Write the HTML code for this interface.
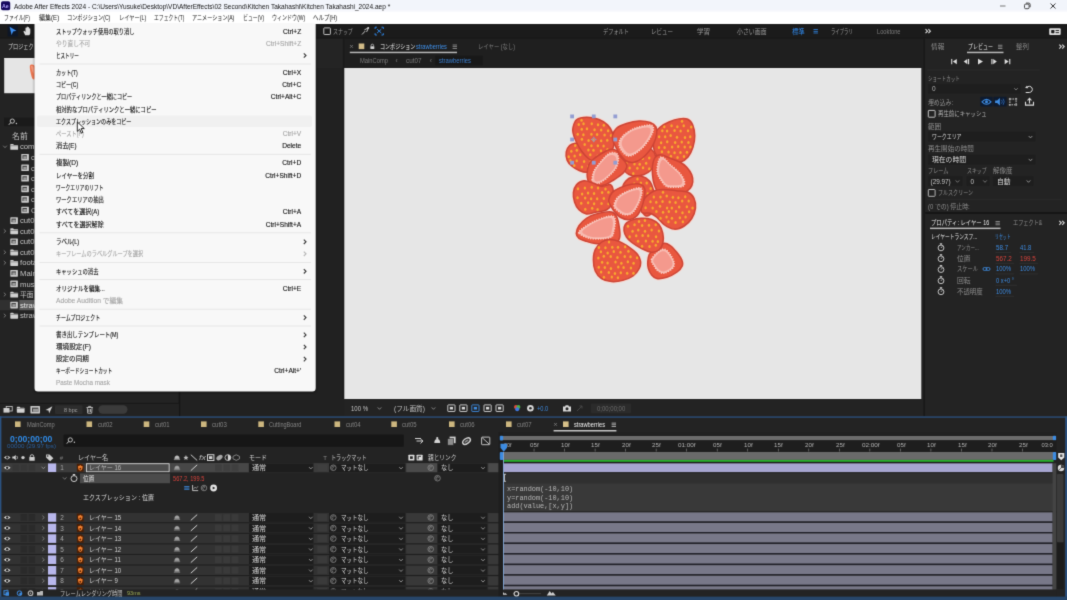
<!DOCTYPE html>
<html lang="ja">
<head>
<meta charset="utf-8">
<title>Adobe After Effects 2024</title>
<style>
html,body{margin:0;padding:0;}
body{width:1067px;height:600px;overflow:hidden;background:#232323;position:relative;
font-family:"Liberation Sans","Noto Sans CJK JP",sans-serif;}
#app{position:absolute;left:0;top:0;width:1067px;height:600px;overflow:hidden;background:#232323;filter:url(#soft);}
#app svg.g{position:absolute;left:0;top:0;}
.t{position:absolute;white-space:nowrap;display:block;}
.b{font-weight:bold;}
.k{-webkit-text-stroke:0.12px currentColor;}
.m{font-family:"Liberation Mono","DejaVu Sans Mono",monospace;}
</style>
</head>
<body>
<svg width="0" height="0" style="position:absolute" aria-hidden="true"><defs><filter id="soft" x="0" y="0" width="100%" height="100%" color-interpolation-filters="sRGB"><feConvolveMatrix order="3" kernelMatrix="1 6 1 6 36 6 1 6 1" edgeMode="duplicate" preserveAlpha="true"/></filter><filter id="sh" x="-5%" y="-5%" width="110%" height="110%"><feGaussianBlur stdDeviation="1.2"/></filter></defs></svg>
<div id="app">
<svg class="g" width="1067" height="600" viewBox="0 0 1067 600"><rect x="-4" y="38.4" width="183" height="378.1" fill="#232323"/><rect x="178.6" y="38.4" width="1.8" height="378.1" fill="#151515"/><rect x="180.4" y="38.4" width="163.9" height="378.1" fill="#212121"/></svg>
<span id="t1" class="t " style="left:8px;top:42px;font-size:6.4px;line-height:10px;color:#d4d4d4;transform-origin:0 50%;transform:scaleX(0.8);">プロジェクト</span>
<svg class="g" width="1067" height="600" viewBox="0 0 1067 600"><rect x="4.2" y="58.2" width="55.8" height="35" fill="#e5e5e5"/><rect x="4.2" y="58.2" width="55.8" height="0.8" fill="#f3f3f3"/><g transform="translate(27.5 63.5)"><path d="M3.200 1.200C5.500 0.600 7.600 1.600 7.800 4C8.100 8.500 7.800 12.500 7.200 15.800C5.900 16.600 4.800 15.800 4.200 13.600C3.200 10 2.400 6.500 2.300 3.600C2.300 2.300 2.600 1.500 3.200 1.200Z" fill="#ec7650"/><path d="M3.400 2.600C4.800 2.200 6 2.800 6.200 4.400C6.400 6.500 6.300 8.500 6.100 10.200C5.100 9 4 6 3.400 2.600Z" fill="#f29a7e"/></g><rect x="4" y="117.6" width="175" height="8.6" fill="#1a1a1a"/><g transform="translate(8 118.2)"><circle cx="4.300" cy="2.900" r="2.100" stroke="#d0d0d0" stroke-width="0.900" fill="none"/><path d="M2.800 4.400L0.800 6.600" stroke="#d0d0d0" stroke-width="1"/><circle cx="8.400" cy="5.300" r="0.700" fill="#d0d0d0"/></g></svg>
<span id="t2" class="t " style="left:12.2px;top:132px;font-size:7.6px;line-height:10px;color:#c4c4c4;transform-origin:0 50%;transform:scaleX(1.04);">名前</span>
<svg class="g" width="1067" height="600" viewBox="0 0 1067 600"><g transform="translate(10 143.5)"><path d="M0.3 1.0q0-.6.6-.6h2.2l.9 1h3.500q.6 0 .6.600v3.700q0 .6-.6.600H.9q-.6 0-.6-.6z" fill="#cfcfcf"/><rect x="0.3" y="2.100" width="7.800" height="0.500" fill="#555"/></g><g transform="translate(2.6 144.9)"><path d="M0.600 0.800L2.400 2.800L4.200 0.800" stroke="#8a8a8a" stroke-width="0.800" fill="none"/></g></svg>
<span id="t3" class="t " style="left:20.2px;top:142px;font-size:7.4px;line-height:10px;color:#c4c4c4;transform-origin:0 50%;transform:scaleX(1.04);">comp</span>
<svg class="g" width="1067" height="600" viewBox="0 0 1067 600"><g transform="translate(21 153.6)"><rect x="0.300" y="0.300" width="7.600" height="6.600" rx="0.600" fill="#c9c9c9"/><rect x="1.500" y="1.600" width="4.400" height="3.600" fill="#3a3a3a"/><rect x="2.300" y="2.600" width="3.400" height="2.600" fill="#9c9c9c"/></g></svg>
<span id="t4" class="t " style="left:31.2px;top:153px;font-size:7.4px;line-height:10px;color:#c4c4c4;transform-origin:0 50%;transform:scaleX(1.04);">cut01</span>
<svg class="g" width="1067" height="600" viewBox="0 0 1067 600"><g transform="translate(21 164.2)"><rect x="0.300" y="0.300" width="7.600" height="6.600" rx="0.600" fill="#c9c9c9"/><rect x="1.500" y="1.600" width="4.400" height="3.600" fill="#3a3a3a"/><rect x="2.300" y="2.600" width="3.400" height="2.600" fill="#9c9c9c"/></g></svg>
<span id="t5" class="t " style="left:31.2px;top:164px;font-size:7.4px;line-height:10px;color:#c4c4c4;transform-origin:0 50%;transform:scaleX(1.04);">cut02</span>
<svg class="g" width="1067" height="600" viewBox="0 0 1067 600"><g transform="translate(21 174.7)"><rect x="0.300" y="0.300" width="7.600" height="6.600" rx="0.600" fill="#c9c9c9"/><rect x="1.500" y="1.600" width="4.400" height="3.600" fill="#3a3a3a"/><rect x="2.300" y="2.600" width="3.400" height="2.600" fill="#9c9c9c"/></g></svg>
<span id="t6" class="t " style="left:31.2px;top:174px;font-size:7.4px;line-height:10px;color:#c4c4c4;transform-origin:0 50%;transform:scaleX(1.04);">cut03</span>
<svg class="g" width="1067" height="600" viewBox="0 0 1067 600"><g transform="translate(21 185.3)"><rect x="0.300" y="0.300" width="7.600" height="6.600" rx="0.600" fill="#c9c9c9"/><rect x="1.500" y="1.600" width="4.400" height="3.600" fill="#3a3a3a"/><rect x="2.300" y="2.600" width="3.400" height="2.600" fill="#9c9c9c"/></g></svg>
<span id="t7" class="t " style="left:31.2px;top:185px;font-size:7.4px;line-height:10px;color:#c4c4c4;transform-origin:0 50%;transform:scaleX(1.04);">cut04</span>
<svg class="g" width="1067" height="600" viewBox="0 0 1067 600"><g transform="translate(21 195.8)"><rect x="0.300" y="0.300" width="7.600" height="6.600" rx="0.600" fill="#c9c9c9"/><rect x="1.500" y="1.600" width="4.400" height="3.600" fill="#3a3a3a"/><rect x="2.300" y="2.600" width="3.400" height="2.600" fill="#9c9c9c"/></g></svg>
<span id="t8" class="t " style="left:31.2px;top:195px;font-size:7.4px;line-height:10px;color:#c4c4c4;transform-origin:0 50%;transform:scaleX(1.04);">cut05</span>
<svg class="g" width="1067" height="600" viewBox="0 0 1067 600"><g transform="translate(21 206.4)"><rect x="0.300" y="0.300" width="7.600" height="6.600" rx="0.600" fill="#c9c9c9"/><rect x="1.500" y="1.600" width="4.400" height="3.600" fill="#3a3a3a"/><rect x="2.300" y="2.600" width="3.400" height="2.600" fill="#9c9c9c"/></g></svg>
<span id="t9" class="t " style="left:31.2px;top:206px;font-size:7.4px;line-height:10px;color:#c4c4c4;transform-origin:0 50%;transform:scaleX(1.04);">CuttingBoard</span>
<svg class="g" width="1067" height="600" viewBox="0 0 1067 600"><g transform="translate(10 217)"><rect x="0.300" y="0.300" width="7.600" height="6.600" rx="0.600" fill="#c9c9c9"/><rect x="1.500" y="1.600" width="4.400" height="3.600" fill="#3a3a3a"/><rect x="2.300" y="2.600" width="3.400" height="2.600" fill="#9c9c9c"/></g></svg>
<span id="t10" class="t " style="left:20.2px;top:216px;font-size:7.4px;line-height:10px;color:#c4c4c4;transform-origin:0 50%;transform:scaleX(1.04);">cut06</span>
<svg class="g" width="1067" height="600" viewBox="0 0 1067 600"><g transform="translate(10 227.9)"><path d="M0.3 1.0q0-.6.6-.6h2.2l.9 1h3.500q.6 0 .6.600v3.700q0 .6-.6.600H.9q-.6 0-.6-.6z" fill="#cfcfcf"/><rect x="0.3" y="2.100" width="7.800" height="0.500" fill="#555"/></g><g transform="translate(3 228.7)"><path d="M0.800 0.600L2.800 2.400L0.800 4.200" stroke="#8a8a8a" stroke-width="0.800" fill="none"/></g></svg>
<span id="t11" class="t " style="left:20.2px;top:227px;font-size:7.4px;line-height:10px;color:#c4c4c4;transform-origin:0 50%;transform:scaleX(1.04);">cut06 レイヤー</span>
<svg class="g" width="1067" height="600" viewBox="0 0 1067 600"><g transform="translate(10 238.1)"><rect x="0.300" y="0.300" width="7.600" height="6.600" rx="0.600" fill="#c9c9c9"/><rect x="1.500" y="1.600" width="4.400" height="3.600" fill="#3a3a3a"/><rect x="2.300" y="2.600" width="3.400" height="2.600" fill="#9c9c9c"/></g></svg>
<span id="t12" class="t " style="left:20.2px;top:237px;font-size:7.4px;line-height:10px;color:#c4c4c4;transform-origin:0 50%;transform:scaleX(1.04);">cut07</span>
<svg class="g" width="1067" height="600" viewBox="0 0 1067 600"><g transform="translate(10 249.1)"><path d="M0.3 1.0q0-.6.6-.6h2.2l.9 1h3.500q.6 0 .6.600v3.700q0 .6-.6.600H.9q-.6 0-.6-.6z" fill="#cfcfcf"/><rect x="0.3" y="2.100" width="7.800" height="0.500" fill="#555"/></g><g transform="translate(3 249.9)"><path d="M0.800 0.600L2.800 2.400L0.800 4.200" stroke="#8a8a8a" stroke-width="0.800" fill="none"/></g></svg>
<span id="t13" class="t " style="left:20.2px;top:248px;font-size:7.4px;line-height:10px;color:#c4c4c4;transform-origin:0 50%;transform:scaleX(1.04);">cut07 レイヤー</span>
<svg class="g" width="1067" height="600" viewBox="0 0 1067 600"><g transform="translate(10 259.6)"><path d="M0.3 1.0q0-.6.6-.6h2.2l.9 1h3.500q.6 0 .6.600v3.700q0 .6-.6.600H.9q-.6 0-.6-.6z" fill="#cfcfcf"/><rect x="0.3" y="2.100" width="7.800" height="0.500" fill="#555"/></g><g transform="translate(3 260.4)"><path d="M0.800 0.600L2.800 2.400L0.800 4.200" stroke="#8a8a8a" stroke-width="0.800" fill="none"/></g></svg>
<span id="t14" class="t " style="left:20.2px;top:258px;font-size:7.4px;line-height:10px;color:#c4c4c4;transform-origin:0 50%;transform:scaleX(1.04);">footage</span>
<svg class="g" width="1067" height="600" viewBox="0 0 1067 600"><g transform="translate(10 269.8)"><rect x="0.300" y="0.300" width="7.600" height="6.600" rx="0.600" fill="#c9c9c9"/><rect x="1.500" y="1.600" width="4.400" height="3.600" fill="#3a3a3a"/><rect x="2.300" y="2.600" width="3.400" height="2.600" fill="#9c9c9c"/></g></svg>
<span id="t15" class="t " style="left:20.2px;top:269px;font-size:7.4px;line-height:10px;color:#c4c4c4;transform-origin:0 50%;transform:scaleX(1.04);">MainComp</span>
<svg class="g" width="1067" height="600" viewBox="0 0 1067 600"><g transform="translate(10 280.3)"><rect x="0.300" y="0.300" width="7.600" height="6.600" rx="0.600" fill="#c9c9c9"/><rect x="1.500" y="1.600" width="4.400" height="3.600" fill="#3a3a3a"/><rect x="2.300" y="2.600" width="3.400" height="2.600" fill="#9c9c9c"/></g></svg>
<span id="t16" class="t " style="left:20.2px;top:280px;font-size:7.4px;line-height:10px;color:#c4c4c4;transform-origin:0 50%;transform:scaleX(1.04);">mushroom</span>
<svg class="g" width="1067" height="600" viewBox="0 0 1067 600"><g transform="translate(10 291.3)"><path d="M0.3 1.0q0-.6.6-.6h2.2l.9 1h3.500q.6 0 .6.600v3.700q0 .6-.6.600H.9q-.6 0-.6-.6z" fill="#cfcfcf"/><rect x="0.3" y="2.100" width="7.800" height="0.500" fill="#555"/></g><g transform="translate(3 292.1)"><path d="M0.800 0.600L2.800 2.400L0.800 4.200" stroke="#8a8a8a" stroke-width="0.800" fill="none"/></g></svg>
<span id="t17" class="t " style="left:20.2px;top:290px;font-size:7.4px;line-height:10px;color:#c4c4c4;transform-origin:0 50%;transform:scaleX(0.92);">平面</span>
<svg class="g" width="1067" height="600" viewBox="0 0 1067 600"><rect x="-4" y="300" width="23.3" height="10.2" fill="#303030"/><rect x="19.3" y="300" width="159.7" height="10.2" fill="#5a5a5a"/><g transform="translate(10 301.5)"><rect x="0.300" y="0.300" width="7.600" height="6.600" rx="0.600" fill="#c9c9c9"/><rect x="1.500" y="1.600" width="4.400" height="3.600" fill="#3a3a3a"/><rect x="2.300" y="2.600" width="3.400" height="2.600" fill="#9c9c9c"/></g></svg>
<span id="t18" class="t " style="left:20.2px;top:301px;font-size:7.4px;line-height:10px;color:#e6e6e6;transform-origin:0 50%;transform:scaleX(1.04);">strawberries</span>
<svg class="g" width="1067" height="600" viewBox="0 0 1067 600"><g transform="translate(10 312.4)"><path d="M0.3 1.0q0-.6.6-.6h2.2l.9 1h3.500q.6 0 .6.600v3.700q0 .6-.6.600H.9q-.6 0-.6-.6z" fill="#cfcfcf"/><rect x="0.3" y="2.100" width="7.800" height="0.500" fill="#555"/></g><g transform="translate(3 313.2)"><path d="M0.800 0.600L2.800 2.400L0.800 4.200" stroke="#8a8a8a" stroke-width="0.800" fill="none"/></g></svg>
<span id="t19" class="t " style="left:20.2px;top:311px;font-size:7.4px;line-height:10px;color:#c4c4c4;transform-origin:0 50%;transform:scaleX(1.04);">strawberries レイヤー</span>
<svg class="g" width="1067" height="600" viewBox="0 0 1067 600"><rect x="-4" y="403.5" width="183" height="13" fill="#222222"/><rect x="-4" y="402.9" width="183" height="1" fill="#191919"/><g transform="translate(3 405.8)"><rect x="0.500" y="2.200" width="6" height="4.600" fill="#cfcfcf"/><rect x="3.200" y="0.600" width="6" height="4.600" fill="none" stroke="#cfcfcf" stroke-width="0.800"/></g><g transform="translate(16.5 406.4)"><path d="M0.3 1.0q0-.6.6-.6h2.2l.9 1h3.500q.6 0 .6.600v3.700q0 .6-.6.600H.9q-.6 0-.6-.6z" fill="#d4d4d4"/><rect x="0.3" y="2.100" width="7.800" height="0.500" fill="#555"/></g><g transform="translate(30 405.6)"><rect x="0.400" y="0.400" width="9.600" height="7.400" rx="0.600" fill="#c9c9c9"/><rect x="2" y="2" width="6.400" height="4.200" fill="#444"/><rect x="3" y="3.200" width="5.400" height="3" fill="#9a9a9a"/></g><g transform="translate(45 405.6)"><path d="M7.400 0.600L0.600 4.300L3.600 4.800L4.100 7.800Z" fill="#d0d0d0"/></g><rect x="55" y="405.2" width="27.5" height="8.8" fill="#2d2d2d" rx="1"/></svg>
<span id="t20" class="t " style="left:63.7px;top:405px;font-size:6.2px;line-height:10px;color:#a4a4a4;transform-origin:0 50%;transform:scaleX(0.89);">8 bpc</span>
<svg class="g" width="1067" height="600" viewBox="0 0 1067 600"><g transform="translate(86 405.8)"><path d="M0.500 1.700H6.900M2.600 1.600V0.600H4.800V1.600M1.300 1.900L1.700 7.400H5.700L6.100 1.900M2.900 3.200V6.200M4.500 3.200V6.200" stroke="#cfcfcf" stroke-width="0.800" fill="none"/></g><rect x="98.4" y="405.3" width="29.1" height="8.5" fill="#3b3b3b" rx="4.2"/><rect x="344.3" y="38.4" width="579" height="29.6" fill="#1f1f1f"/><rect x="316" y="38.4" width="28.3" height="29.6" fill="#242424"/><rect x="342.8" y="38.4" width="1.5" height="360.6" fill="#1a1a1a"/><rect x="923.4" y="38.4" width="1.6" height="378.1" fill="#181818"/><g transform="translate(349.5 44.4)"><path d="M0.600 0.600L3.400 3.400M3.400 0.600L0.600 3.400" stroke="#8a8a8a" stroke-width="0.700"/></g><rect x="358.7" y="43.5" width="5.6" height="5.6" fill="#d1bb87"/><g transform="translate(369.6 43.6) scale(0.8308 0.8286) translate(0 0)"><path d="M1.800 3.200V2.200Q1.800 0.700 3.300 0.700Q4.800 0.700 4.800 2.200V3.200" stroke="#d0d0d0" stroke-width="0.900" fill="none"/><rect x="0.900" y="3.100" width="4.800" height="3.400" rx="0.500" fill="#d0d0d0"/></g></svg>
<span id="t21" class="t " style="left:379.5px;top:42px;font-size:6.4px;line-height:10px;color:#f0f0f0;transform-origin:0 50%;transform:scaleX(0.79);">コンポジション</span>
<span id="t22" class="t " style="left:416.2px;top:42px;font-size:6.6px;line-height:10px;color:#3f8fe8;transform-origin:0 50%;transform:scaleX(0.86);">strawberries</span>
<svg class="g" width="1067" height="600" viewBox="0 0 1067 600"><rect x="452.6" y="44.6" width="4.4" height="0.8" fill="#9a9a9a"/><rect x="452.6" y="46.3" width="4.4" height="0.8" fill="#9a9a9a"/><rect x="452.6" y="48" width="4.4" height="0.8" fill="#9a9a9a"/><rect x="349.8" y="51.7" width="107.2" height="1.5" fill="#b9b9b9"/></svg>
<span id="t23" class="t " style="left:477.7px;top:42px;font-size:6.3px;line-height:10px;color:#7e7e7e;transform-origin:0 50%;transform:scaleX(0.85);">レイヤー (なし)</span>
<span id="t24" class="t " style="left:360px;top:56px;font-size:6.3px;line-height:10px;color:#7c7c7c;transform-origin:0 50%;transform:scaleX(0.92);">MainComp</span>
<span id="t25" class="t " style="left:395.5px;top:56px;font-size:6.5px;line-height:10px;color:#7c7c7c;transform-origin:0 50%;">‹</span>
<span id="t26" class="t " style="left:406px;top:56px;font-size:6.3px;line-height:10px;color:#7c7c7c;transform-origin:0 50%;">cut07</span>
<span id="t27" class="t " style="left:429.8px;top:56px;font-size:6.5px;line-height:10px;color:#7c7c7c;transform-origin:0 50%;">‹</span>
<svg class="g" width="1067" height="600" viewBox="0 0 1067 600"><rect x="435.3" y="55.8" width="47.4" height="9.4" fill="#181818"/></svg>
<span id="t28" class="t " style="left:439.3px;top:56px;font-size:6.3px;line-height:10px;color:#3a7fd0;transform-origin:0 50%;transform:scaleX(0.93);">strawberries</span>
<svg class="g" width="1067" height="600" viewBox="0 0 1067 600"><rect x="344.3" y="68" width="577" height="331" fill="#e6e6e6"/><g transform="translate(555 105) scale(1.0000 1.0000) translate(-555 -105)"><g fill="#f6d9d1" stroke="#f6dcd5" stroke-width="3.6" stroke-linejoin="round"><path d="M575.25 143.25C573.27 143.52 571.12 144.04 569.62 145.5C568.12 146.96 566.67 149.56 566.25 152C565.83 154.44 566.21 157.79 567.12 160.12C568.04 162.46 569.73 164.27 571.75 166C573.77 167.73 576.69 169.46 579.25 170.5C581.81 171.54 584.88 172.62 587.12 172.25C589.38 171.88 591.6 170.38 592.75 168.25C593.9 166.12 594.62 162.62 594 159.5C593.38 156.38 591.08 152.1 589 149.5C586.92 146.9 583.79 144.92 581.5 143.88C579.21 142.83 577.23 142.98 575.25 143.25Z"/><path d="M622.75 153.25C623.9 150.75 625.88 148.25 629 147C632.12 145.75 637.75 145.33 641.5 145.75C645.25 146.17 649.1 147.62 651.5 149.5C653.9 151.38 655.35 154.5 655.88 157C656.4 159.5 655.56 162.21 654.62 164.5C653.69 166.79 652.02 169.08 650.25 170.75C648.48 172.42 646.4 173.62 644 174.5C641.6 175.38 638.38 176 635.88 176C633.38 176 630.88 175.38 629 174.5C627.12 173.62 625.77 172.83 624.62 170.75C623.48 168.67 622.44 164.92 622.12 162C621.81 159.08 621.6 155.75 622.75 153.25Z"/><path d="M655.88 132C657.02 129.71 658.06 128.67 660.25 127C662.44 125.33 665.88 123.35 669 122C672.12 120.65 675.88 119.33 679 118.88C682.12 118.42 685.46 118.21 687.75 119.25C690.04 120.29 691.58 122.38 692.75 125.12C693.92 127.88 694.71 132.1 694.75 135.75C694.79 139.4 694.12 143.46 693 147C691.88 150.54 690.12 154.46 688 157C685.88 159.54 683.21 161.31 680.25 162.25C677.29 163.19 673.58 163.19 670.25 162.62C666.92 162.06 662.85 160.65 660.25 158.88C657.65 157.1 655.77 155.02 654.62 152C653.48 148.98 653.17 144.08 653.38 140.75C653.58 137.42 654.73 134.29 655.88 132Z"/><path d="M573 127.62C573.58 125.48 574.25 121.48 576.5 119.75C578.75 118.02 582.75 117.29 586.5 117.25C590.25 117.21 595.46 118.19 599 119.5C602.54 120.81 605.46 122.83 607.75 125.12C610.04 127.42 611.67 130.23 612.75 133.25C613.83 136.27 614.62 139.92 614.25 143.25C613.88 146.58 612.31 150.44 610.5 153.25C608.69 156.06 605.67 158.67 603.38 160.12C601.08 161.58 599.15 162.19 596.75 162C594.35 161.81 591.54 160.83 589 159C586.46 157.17 583.69 154 581.5 151C579.31 148 577.29 144.06 575.88 141C574.46 137.94 573.48 134.85 573 132.62C572.52 130.4 572.42 129.77 573 127.62Z"/><path d="M612.5 135.12C613.12 133.15 614.17 130.19 616.5 128.25C618.83 126.31 622.75 124.71 626.5 123.5C630.25 122.29 635.04 121.17 639 121C642.96 120.83 647.42 121.5 650.25 122.5C653.08 123.5 654.92 125.17 656 127C657.08 128.83 657.04 130.96 656.75 133.5C656.46 136.04 655.5 139.33 654.25 142.25C653 145.17 651.33 148.29 649.25 151C647.17 153.71 644.29 156.62 641.75 158.5C639.21 160.38 636.54 161.83 634 162.25C631.46 162.67 628.79 162.25 626.5 161C624.21 159.75 622.12 157.25 620.25 154.75C618.38 152.25 616.5 148.44 615.25 146C614 143.56 613.21 141.94 612.75 140.12C612.29 138.31 611.88 137.1 612.5 135.12Z"/><path d="M652.5 165.75C652.92 162.94 653.67 159.46 655 157.62C656.33 155.79 657.96 154.65 660.5 154.75C663.04 154.85 666.96 157 670.25 158.25C673.54 159.5 677.5 160.75 680.25 162.25C683 163.75 684.83 165.17 686.75 167.25C688.67 169.33 690.75 172.29 691.75 174.75C692.75 177.21 693 179.75 692.75 182C692.5 184.25 691.92 186.38 690.25 188.25C688.58 190.12 686.08 192.1 682.75 193.25C679.42 194.4 674.1 195.02 670.25 195.12C666.4 195.23 662.29 195.65 659.62 193.88C656.96 192.1 655.44 187.73 654.25 184.5C653.06 181.27 652.79 177.62 652.5 174.5C652.21 171.38 652.08 168.56 652.5 165.75Z"/><path d="M588.75 165.12C589.69 162.67 590.62 161.69 592.75 159.75C594.88 157.81 598.58 155.21 601.5 153.5C604.42 151.79 607.71 149.96 610.25 149.5C612.79 149.04 615.19 149.71 616.75 150.75C618.31 151.79 618.17 153.83 619.62 155.75C621.08 157.67 624.31 160.33 625.5 162.25C626.69 164.17 627.21 165.38 626.75 167.25C626.29 169.12 624.88 171.42 622.75 173.5C620.62 175.58 616.92 177.88 614 179.75C611.08 181.62 608.27 183.75 605.25 184.75C602.23 185.75 598.58 186.17 595.88 185.75C593.17 185.33 590.46 184.12 589 182.25C587.54 180.38 587.17 177.35 587.12 174.5C587.08 171.65 587.81 167.58 588.75 165.12Z"/><path d="M573.38 192.62C573.69 189.71 574.73 186.73 576.5 184.75C578.27 182.77 581.25 181.04 584 180.75C586.75 180.46 590.04 182.06 593 183C595.96 183.94 598.83 186.08 601.75 186.38C604.67 186.67 608.56 183.81 610.5 184.75C612.44 185.69 613.1 188.92 613.38 192C613.65 195.08 613.23 200.29 612.12 203.25C611.02 206.21 609.52 208.25 606.75 209.75C603.98 211.25 598.88 211.54 595.5 212.25C592.12 212.96 589.25 214.42 586.5 214C583.75 213.58 580.98 211.71 579 209.75C577.02 207.79 575.56 205.1 574.62 202.25C573.69 199.4 573.06 195.54 573.38 192.62Z"/><path d="M622.75 188.88C622.23 186.58 624.21 183.02 625.88 181C627.54 178.98 630.15 177.54 632.75 176.75C635.35 175.96 638.75 175.58 641.5 176.25C644.25 176.92 647.29 178.54 649.25 180.75C651.21 182.96 652.25 185.96 653.25 189.5C654.25 193.04 655.42 198.21 655.25 202C655.08 205.79 653.92 210 652.25 212.25C650.58 214.5 647.67 216.79 645.25 215.5C642.83 214.21 640.46 207.96 637.75 204.5C635.04 201.04 631.5 197.35 629 194.75C626.5 192.15 623.27 191.17 622.75 188.88Z"/><path d="M641.5 212C640.46 209.71 641.92 203 644 199.5C646.08 196 650.67 192.67 654 191C657.33 189.33 660.25 189.54 664 189.5C667.75 189.46 672.5 190.29 676.5 190.75C680.5 191.21 685.08 191 688 192.25C690.92 193.5 692.75 195.58 694 198.25C695.25 200.92 695.88 204.88 695.5 208.25C695.12 211.62 693.62 215.54 691.75 218.5C689.88 221.46 687.17 224.23 684.25 226C681.33 227.77 677.58 229.33 674.25 229.12C670.92 228.92 667.17 226.73 664.25 224.75C661.33 222.77 659.08 219.17 656.75 217.25C654.42 215.33 652.79 214.12 650.25 213.25C647.71 212.38 642.54 214.29 641.5 212Z"/><path d="M608.75 200.12C609.06 198.1 610.21 194.71 612.12 192.62C614.04 190.54 617.02 189.02 620.25 187.62C623.48 186.23 628.06 184.77 631.5 184.25C634.94 183.73 638.67 183.73 640.88 184.5C643.08 185.27 644.19 186.75 644.75 188.88C645.31 191 644.75 194.19 644.25 197.25C643.75 200.31 643 204.12 641.75 207.25C640.5 210.38 638.83 213.92 636.75 216C634.67 218.08 632 219.54 629.25 219.75C626.5 219.96 622.79 218.71 620.25 217.25C617.71 215.79 615.67 213.08 614 211C612.33 208.92 611.12 206.56 610.25 204.75C609.38 202.94 608.44 202.15 608.75 200.12Z"/><path d="M576.25 233.5C576.25 231.38 577.29 228.29 579 225.75C580.71 223.21 583.58 220.23 586.5 218.25C589.42 216.27 592.33 214.92 596.5 213.88C600.67 212.83 608.12 211.48 611.5 212C614.88 212.52 615.46 214.5 616.75 217C618.04 219.5 618.75 223.67 619.25 227C619.75 230.33 620.17 234.46 619.75 237C619.33 239.54 618.75 241.17 616.75 242.25C614.75 243.33 611.33 243.29 607.75 243.5C604.17 243.71 599 243.92 595.25 243.5C591.5 243.08 587.96 241.83 585.25 241C582.54 240.17 580.5 239.75 579 238.5C577.5 237.25 576.25 235.62 576.25 233.5Z"/><path d="M647.75 262C647.9 259.67 648 256.79 649.25 254.5C650.5 252.21 652.79 250.12 655.25 248.25C657.71 246.38 661.46 243.67 664 243.25C666.54 242.83 668.38 244.25 670.5 245.75C672.62 247.25 674.88 249.92 676.75 252.25C678.62 254.58 680.83 257.46 681.75 259.75C682.67 262.04 683.08 263.92 682.25 266C681.42 268.08 679.33 270.38 676.75 272.25C674.17 274.12 670.08 276.21 666.75 277.25C663.42 278.29 659.29 278.92 656.75 278.5C654.21 278.08 652.9 276.42 651.5 274.75C650.1 273.08 649 270.62 648.38 268.5C647.75 266.38 647.6 264.33 647.75 262Z"/><path d="M624 230.75C623.79 228.67 624 226.27 625.25 224.5C626.5 222.73 628.79 221.17 631.5 220.12C634.21 219.08 638.17 218.35 641.5 218.25C644.83 218.15 648.58 218.46 651.5 219.5C654.42 220.54 657.12 222.21 659 224.5C660.88 226.79 662.08 230.29 662.75 233.25C663.42 236.21 663.58 239.5 663 242.25C662.42 245 661.17 248.08 659.25 249.75C657.33 251.42 654.46 252.46 651.5 252.25C648.54 252.04 644.83 250.17 641.5 248.5C638.17 246.83 634 244.17 631.5 242.25C629 240.33 627.75 238.92 626.5 237C625.25 235.08 624.21 232.83 624 230.75Z"/><path d="M593.38 259.75C593.38 256.17 593.9 252.42 595.25 249.5C596.6 246.58 599.21 243.92 601.5 242.25C603.79 240.58 606.08 239.65 609 239.5C611.92 239.35 615.67 240.12 619 241.38C622.33 242.62 626.04 244.98 629 247C631.96 249.02 634.83 251.17 636.75 253.5C638.67 255.83 640.08 258.5 640.5 261C640.92 263.5 640.5 266 639.25 268.5C638 271 635.75 274.02 633 276C630.25 277.98 626.33 279.44 622.75 280.38C619.17 281.31 615.04 281.94 611.5 281.62C607.96 281.31 604.21 280.27 601.5 278.5C598.79 276.73 596.6 274.12 595.25 271C593.9 267.88 593.38 263.33 593.38 259.75Z"/></g><path d="M575.25 143.25C573.27 143.52 571.12 144.04 569.62 145.5C568.12 146.96 566.67 149.56 566.25 152C565.83 154.44 566.21 157.79 567.12 160.12C568.04 162.46 569.73 164.27 571.75 166C573.77 167.73 576.69 169.46 579.25 170.5C581.81 171.54 584.88 172.62 587.12 172.25C589.38 171.88 591.6 170.38 592.75 168.25C593.9 166.12 594.62 162.62 594 159.5C593.38 156.38 591.08 152.1 589 149.5C586.92 146.9 583.79 144.92 581.5 143.88C579.21 142.83 577.23 142.98 575.25 143.25Z" fill="#e9573f" stroke="#cd4435" stroke-width="1.5"/><g fill="#f7a82f"><ellipse cx="575.2" cy="145.38" rx="1.2" ry="1.5"/><ellipse cx="580.97" cy="145.62" rx="1.2" ry="1.5"/><ellipse cx="571.31" cy="151.18" rx="1.2" ry="1.5"/><ellipse cx="576.84" cy="150.2" rx="1.2" ry="1.5"/><ellipse cx="583.43" cy="151.22" rx="1.2" ry="1.5"/><ellipse cx="568.71" cy="156.68" rx="1.2" ry="1.5"/><ellipse cx="574.66" cy="155.98" rx="1.2" ry="1.5"/><ellipse cx="580.26" cy="154.78" rx="1.2" ry="1.5"/><ellipse cx="587.61" cy="154.87" rx="1.2" ry="1.5"/><ellipse cx="570.43" cy="160.38" rx="1.2" ry="1.5"/><ellipse cx="576.71" cy="160.82" rx="1.2" ry="1.5"/><ellipse cx="584.13" cy="161.58" rx="1.2" ry="1.5"/><ellipse cx="590.89" cy="161.17" rx="1.2" ry="1.5"/><ellipse cx="574.26" cy="165.6" rx="1.2" ry="1.5"/><ellipse cx="581.95" cy="167.03" rx="1.2" ry="1.5"/><ellipse cx="588.23" cy="166.46" rx="1.2" ry="1.5"/></g><path d="M622.75 153.25C623.9 150.75 625.88 148.25 629 147C632.12 145.75 637.75 145.33 641.5 145.75C645.25 146.17 649.1 147.62 651.5 149.5C653.9 151.38 655.35 154.5 655.88 157C656.4 159.5 655.56 162.21 654.62 164.5C653.69 166.79 652.02 169.08 650.25 170.75C648.48 172.42 646.4 173.62 644 174.5C641.6 175.38 638.38 176 635.88 176C633.38 176 630.88 175.38 629 174.5C627.12 173.62 625.77 172.83 624.62 170.75C623.48 168.67 622.44 164.92 622.12 162C621.81 159.08 621.6 155.75 622.75 153.25Z" fill="#e9573f" stroke="#cd4435" stroke-width="1.5"/><g fill="#f7a82f"><ellipse cx="637.65" cy="147.89" rx="1.2" ry="1.5"/><ellipse cx="627.48" cy="152.64" rx="1.2" ry="1.5"/><ellipse cx="632.7" cy="152.76" rx="1.2" ry="1.5"/><ellipse cx="641.05" cy="153.61" rx="1.2" ry="1.5"/><ellipse cx="645.96" cy="152.59" rx="1.2" ry="1.5"/><ellipse cx="624.22" cy="157.6" rx="1.2" ry="1.5"/><ellipse cx="630.34" cy="158.14" rx="1.2" ry="1.5"/><ellipse cx="636.21" cy="158.71" rx="1.2" ry="1.5"/><ellipse cx="642.69" cy="158.53" rx="1.2" ry="1.5"/><ellipse cx="649.26" cy="158.09" rx="1.2" ry="1.5"/><ellipse cx="626.35" cy="162.93" rx="1.2" ry="1.5"/><ellipse cx="634.47" cy="164" rx="1.2" ry="1.5"/><ellipse cx="639.73" cy="164.16" rx="1.2" ry="1.5"/><ellipse cx="646.15" cy="163.18" rx="1.2" ry="1.5"/><ellipse cx="629.65" cy="168.06" rx="1.2" ry="1.5"/><ellipse cx="637.37" cy="168.2" rx="1.2" ry="1.5"/><ellipse cx="643.02" cy="167.69" rx="1.2" ry="1.5"/><ellipse cx="649.21" cy="168.71" rx="1.2" ry="1.5"/><ellipse cx="633.27" cy="173.6" rx="1.2" ry="1.5"/></g><path d="M655.88 132C657.02 129.71 658.06 128.67 660.25 127C662.44 125.33 665.88 123.35 669 122C672.12 120.65 675.88 119.33 679 118.88C682.12 118.42 685.46 118.21 687.75 119.25C690.04 120.29 691.58 122.38 692.75 125.12C693.92 127.88 694.71 132.1 694.75 135.75C694.79 139.4 694.12 143.46 693 147C691.88 150.54 690.12 154.46 688 157C685.88 159.54 683.21 161.31 680.25 162.25C677.29 163.19 673.58 163.19 670.25 162.62C666.92 162.06 662.85 160.65 660.25 158.88C657.65 157.1 655.77 155.02 654.62 152C653.48 148.98 653.17 144.08 653.38 140.75C653.58 137.42 654.73 134.29 655.88 132Z" fill="#e9573f" stroke="#cd4435" stroke-width="1.5"/><g fill="#f7a82f"><ellipse cx="682.04" cy="121.28" rx="1.2" ry="1.5"/><ellipse cx="664.29" cy="126.87" rx="1.2" ry="1.5"/><ellipse cx="671.57" cy="125.81" rx="1.2" ry="1.5"/><ellipse cx="677.33" cy="126.66" rx="1.2" ry="1.5"/><ellipse cx="683.71" cy="125.68" rx="1.2" ry="1.5"/><ellipse cx="691.29" cy="126.93" rx="1.2" ry="1.5"/><ellipse cx="662.31" cy="130.78" rx="1.2" ry="1.5"/><ellipse cx="667.11" cy="130.91" rx="1.2" ry="1.5"/><ellipse cx="674.57" cy="130.49" rx="1.2" ry="1.5"/><ellipse cx="680.63" cy="131.11" rx="1.2" ry="1.5"/><ellipse cx="688.02" cy="130.63" rx="1.2" ry="1.5"/><ellipse cx="659.14" cy="136.83" rx="1.2" ry="1.5"/><ellipse cx="665.16" cy="136.69" rx="1.2" ry="1.5"/><ellipse cx="670.66" cy="135.59" rx="1.2" ry="1.5"/><ellipse cx="677.01" cy="137.34" rx="1.2" ry="1.5"/><ellipse cx="684.98" cy="137.44" rx="1.2" ry="1.5"/><ellipse cx="690.22" cy="136.79" rx="1.2" ry="1.5"/><ellipse cx="661.11" cy="142.67" rx="1.2" ry="1.5"/><ellipse cx="667.23" cy="141.76" rx="1.2" ry="1.5"/><ellipse cx="675.15" cy="142.47" rx="1.2" ry="1.5"/><ellipse cx="681.75" cy="142.07" rx="1.2" ry="1.5"/><ellipse cx="688.46" cy="142.5" rx="1.2" ry="1.5"/><ellipse cx="658.98" cy="147.56" rx="1.2" ry="1.5"/><ellipse cx="664.61" cy="147.4" rx="1.2" ry="1.5"/><ellipse cx="672.1" cy="146.96" rx="1.2" ry="1.5"/><ellipse cx="678.22" cy="146.58" rx="1.2" ry="1.5"/><ellipse cx="684.74" cy="147.03" rx="1.2" ry="1.5"/><ellipse cx="690.34" cy="147.09" rx="1.2" ry="1.5"/><ellipse cx="661.93" cy="151.74" rx="1.2" ry="1.5"/><ellipse cx="668.55" cy="152.12" rx="1.2" ry="1.5"/><ellipse cx="674.56" cy="152.64" rx="1.2" ry="1.5"/><ellipse cx="680.44" cy="152.46" rx="1.2" ry="1.5"/><ellipse cx="686.93" cy="152.17" rx="1.2" ry="1.5"/><ellipse cx="665" cy="157.95" rx="1.2" ry="1.5"/><ellipse cx="670.89" cy="156.13" rx="1.2" ry="1.5"/><ellipse cx="677.58" cy="157.47" rx="1.2" ry="1.5"/><ellipse cx="683.98" cy="156.45" rx="1.2" ry="1.5"/></g><path d="M573 127.62C573.58 125.48 574.25 121.48 576.5 119.75C578.75 118.02 582.75 117.29 586.5 117.25C590.25 117.21 595.46 118.19 599 119.5C602.54 120.81 605.46 122.83 607.75 125.12C610.04 127.42 611.67 130.23 612.75 133.25C613.83 136.27 614.62 139.92 614.25 143.25C613.88 146.58 612.31 150.44 610.5 153.25C608.69 156.06 605.67 158.67 603.38 160.12C601.08 161.58 599.15 162.19 596.75 162C594.35 161.81 591.54 160.83 589 159C586.46 157.17 583.69 154 581.5 151C579.31 148 577.29 144.06 575.88 141C574.46 137.94 573.48 134.85 573 132.62C572.52 130.4 572.42 129.77 573 127.62Z" fill="#e9573f" stroke="#cd4435" stroke-width="1.5"/><g fill="#f7a82f"><ellipse cx="581.52" cy="120.35" rx="1.2" ry="1.5"/><ellipse cx="578.76" cy="124.5" rx="1.2" ry="1.5"/><ellipse cx="583.55" cy="123.66" rx="1.2" ry="1.5"/><ellipse cx="591.75" cy="123.68" rx="1.2" ry="1.5"/><ellipse cx="598.02" cy="124.74" rx="1.2" ry="1.5"/><ellipse cx="603.82" cy="125.18" rx="1.2" ry="1.5"/><ellipse cx="581.76" cy="129.22" rx="1.2" ry="1.5"/><ellipse cx="586.98" cy="128.84" rx="1.2" ry="1.5"/><ellipse cx="594.56" cy="129.64" rx="1.2" ry="1.5"/><ellipse cx="601.16" cy="130.06" rx="1.2" ry="1.5"/><ellipse cx="608.11" cy="130.66" rx="1.2" ry="1.5"/><ellipse cx="577.75" cy="134.25" rx="1.2" ry="1.5"/><ellipse cx="583.42" cy="134.84" rx="1.2" ry="1.5"/><ellipse cx="591.43" cy="134.25" rx="1.2" ry="1.5"/><ellipse cx="597.14" cy="134.59" rx="1.2" ry="1.5"/><ellipse cx="604.59" cy="134.93" rx="1.2" ry="1.5"/><ellipse cx="611.03" cy="135.41" rx="1.2" ry="1.5"/><ellipse cx="581.91" cy="139.22" rx="1.2" ry="1.5"/><ellipse cx="588.57" cy="140.49" rx="1.2" ry="1.5"/><ellipse cx="593.56" cy="139.95" rx="1.2" ry="1.5"/><ellipse cx="601.15" cy="140.86" rx="1.2" ry="1.5"/><ellipse cx="607.25" cy="140.18" rx="1.2" ry="1.5"/><ellipse cx="584.7" cy="144.6" rx="1.2" ry="1.5"/><ellipse cx="591.44" cy="145.83" rx="1.2" ry="1.5"/><ellipse cx="597.88" cy="145.63" rx="1.2" ry="1.5"/><ellipse cx="603.63" cy="145.99" rx="1.2" ry="1.5"/><ellipse cx="588.41" cy="150.04" rx="1.2" ry="1.5"/><ellipse cx="593.47" cy="150.22" rx="1.2" ry="1.5"/><ellipse cx="601" cy="150.87" rx="1.2" ry="1.5"/><ellipse cx="607.47" cy="149.39" rx="1.2" ry="1.5"/><ellipse cx="590.28" cy="154.78" rx="1.2" ry="1.5"/><ellipse cx="597.63" cy="155.93" rx="1.2" ry="1.5"/><ellipse cx="604.88" cy="155.86" rx="1.2" ry="1.5"/></g><path d="M612.5 135.12C613.12 133.15 614.17 130.19 616.5 128.25C618.83 126.31 622.75 124.71 626.5 123.5C630.25 122.29 635.04 121.17 639 121C642.96 120.83 647.42 121.5 650.25 122.5C653.08 123.5 654.92 125.17 656 127C657.08 128.83 657.04 130.96 656.75 133.5C656.46 136.04 655.5 139.33 654.25 142.25C653 145.17 651.33 148.29 649.25 151C647.17 153.71 644.29 156.62 641.75 158.5C639.21 160.38 636.54 161.83 634 162.25C631.46 162.67 628.79 162.25 626.5 161C624.21 159.75 622.12 157.25 620.25 154.75C618.38 152.25 616.5 148.44 615.25 146C614 143.56 613.21 141.94 612.75 140.12C612.29 138.31 611.88 137.1 612.5 135.12Z" fill="#e9573f" stroke="#cd4435" stroke-width="1.5"/><path d="M619 143.5C619.17 141 620.25 138.5 622.75 136C625.25 133.5 629.73 130.33 634 128.5C638.27 126.67 645.17 125.21 648.38 125C651.58 124.79 652.69 125.62 653.25 127.25C653.81 128.88 653.25 131.62 651.75 134.75C650.25 137.88 646.96 142.88 644.25 146C641.54 149.12 638.21 151.83 635.5 153.5C632.79 155.17 630.29 156.42 628 156C625.71 155.58 623.25 153.08 621.75 151C620.25 148.92 618.83 146 619 143.5Z" fill="#f7b9af" stroke="#f9d2ca" stroke-width="1.5" stroke-dasharray="1.1 1.4"/><path d="M621.7 142.96C621.84 140.86 622.75 138.76 624.85 136.66C626.95 134.56 630.71 131.9 634.3 130.36C637.89 128.82 643.68 127.6 646.37 127.42C649.07 127.25 650 127.95 650.47 129.31C650.94 130.68 650.47 132.99 649.21 135.61C647.95 138.24 645.18 142.44 642.91 145.06C640.63 147.69 637.83 149.96 635.56 151.36C633.28 152.76 631.18 153.81 629.26 153.46C627.33 153.11 625.27 151.01 624.01 149.26C622.75 147.51 621.56 145.06 621.7 142.96Z" fill="#f4998d"/><path d="M652.5 165.75C652.92 162.94 653.67 159.46 655 157.62C656.33 155.79 657.96 154.65 660.5 154.75C663.04 154.85 666.96 157 670.25 158.25C673.54 159.5 677.5 160.75 680.25 162.25C683 163.75 684.83 165.17 686.75 167.25C688.67 169.33 690.75 172.29 691.75 174.75C692.75 177.21 693 179.75 692.75 182C692.5 184.25 691.92 186.38 690.25 188.25C688.58 190.12 686.08 192.1 682.75 193.25C679.42 194.4 674.1 195.02 670.25 195.12C666.4 195.23 662.29 195.65 659.62 193.88C656.96 192.1 655.44 187.73 654.25 184.5C653.06 181.27 652.79 177.62 652.5 174.5C652.21 171.38 652.08 168.56 652.5 165.75Z" fill="#e9573f" stroke="#cd4435" stroke-width="1.5"/><path d="M657.12 172C656.83 168.77 657.81 162.58 658.75 160.12C659.69 157.67 660.83 156.52 662.75 157.25C664.67 157.98 667.54 162 670.25 164.5C672.96 167 676.71 169.71 679 172.25C681.29 174.79 683.21 177.5 684 179.75C684.79 182 685 184.5 683.75 185.75C682.5 187 679.38 187.15 676.5 187.25C673.62 187.35 669.17 187.67 666.5 186.38C663.83 185.08 662.06 181.9 660.5 179.5C658.94 177.1 657.42 175.23 657.12 172Z" fill="#f7b9af" stroke="#f9d2ca" stroke-width="1.5" stroke-dasharray="1.1 1.4"/><path d="M659.17 172.4C658.93 169.68 659.75 164.49 660.54 162.42C661.32 160.36 662.29 159.39 663.9 160.01C665.51 160.62 667.92 164 670.2 166.1C672.47 168.2 675.62 170.47 677.55 172.61C679.47 174.74 681.08 177.02 681.75 178.91C682.41 180.8 682.59 182.9 681.54 183.95C680.49 185 677.86 185.12 675.45 185.21C673.03 185.29 669.29 185.56 667.05 184.47C664.81 183.39 663.32 180.71 662.01 178.7C660.69 176.68 659.42 175.11 659.17 172.4Z" fill="#f4998d"/><path d="M588.75 165.12C589.69 162.67 590.62 161.69 592.75 159.75C594.88 157.81 598.58 155.21 601.5 153.5C604.42 151.79 607.71 149.96 610.25 149.5C612.79 149.04 615.19 149.71 616.75 150.75C618.31 151.79 618.17 153.83 619.62 155.75C621.08 157.67 624.31 160.33 625.5 162.25C626.69 164.17 627.21 165.38 626.75 167.25C626.29 169.12 624.88 171.42 622.75 173.5C620.62 175.58 616.92 177.88 614 179.75C611.08 181.62 608.27 183.75 605.25 184.75C602.23 185.75 598.58 186.17 595.88 185.75C593.17 185.33 590.46 184.12 589 182.25C587.54 180.38 587.17 177.35 587.12 174.5C587.08 171.65 587.81 167.58 588.75 165.12Z" fill="#e9573f" stroke="#cd4435" stroke-width="1.5"/><path d="M592.12 179.75C592.08 177.6 592.65 173.92 594 171C595.35 168.08 597.75 165.17 600.25 162.25C602.75 159.33 606.33 155 609 153.5C611.67 152 614.67 152.42 616.25 153.25C617.83 154.08 618.46 156.17 618.5 158.5C618.54 160.83 617.88 164.54 616.5 167.25C615.12 169.96 612.75 172.29 610.25 174.75C607.75 177.21 604.17 180.48 601.5 182C598.83 183.52 595.81 184.25 594.25 183.88C592.69 183.5 592.17 181.9 592.12 179.75Z" fill="#f7b9af" stroke="#f9d2ca" stroke-width="1.5" stroke-dasharray="1.1 1.4"/><path d="M594.23 177.97C594.19 176.17 594.66 173.07 595.8 170.62C596.94 168.17 598.95 165.72 601.05 163.27C603.15 160.82 606.16 157.18 608.4 155.92C610.64 154.66 613.16 155.01 614.49 155.71C615.82 156.41 616.35 158.16 616.38 160.12C616.42 162.08 615.86 165.19 614.7 167.47C613.55 169.74 611.55 171.7 609.45 173.77C607.35 175.83 604.34 178.58 602.1 179.86C599.86 181.14 597.32 181.75 596.01 181.43C594.7 181.12 594.26 179.77 594.23 177.97Z" fill="#f4998d"/><path d="M573.38 192.62C573.69 189.71 574.73 186.73 576.5 184.75C578.27 182.77 581.25 181.04 584 180.75C586.75 180.46 590.04 182.06 593 183C595.96 183.94 598.83 186.08 601.75 186.38C604.67 186.67 608.56 183.81 610.5 184.75C612.44 185.69 613.1 188.92 613.38 192C613.65 195.08 613.23 200.29 612.12 203.25C611.02 206.21 609.52 208.25 606.75 209.75C603.98 211.25 598.88 211.54 595.5 212.25C592.12 212.96 589.25 214.42 586.5 214C583.75 213.58 580.98 211.71 579 209.75C577.02 207.79 575.56 205.1 574.62 202.25C573.69 199.4 573.06 195.54 573.38 192.62Z" fill="#e9573f" stroke="#cd4435" stroke-width="1.5"/><g fill="#f7a82f"><ellipse cx="577.98" cy="188.7" rx="1.2" ry="1.5"/><ellipse cx="584.9" cy="188.08" rx="1.2" ry="1.5"/><ellipse cx="591.76" cy="187.23" rx="1.2" ry="1.5"/><ellipse cx="598.05" cy="187.93" rx="1.2" ry="1.5"/><ellipse cx="605.49" cy="188.94" rx="1.2" ry="1.5"/><ellipse cx="582.11" cy="194.05" rx="1.2" ry="1.5"/><ellipse cx="588.03" cy="192.88" rx="1.2" ry="1.5"/><ellipse cx="594.06" cy="193.48" rx="1.2" ry="1.5"/><ellipse cx="602.13" cy="192.5" rx="1.2" ry="1.5"/><ellipse cx="608.43" cy="192.29" rx="1.2" ry="1.5"/><ellipse cx="577.56" cy="197.85" rx="1.2" ry="1.5"/><ellipse cx="585.15" cy="198.04" rx="1.2" ry="1.5"/><ellipse cx="591.09" cy="198.63" rx="1.2" ry="1.5"/><ellipse cx="597.18" cy="198.86" rx="1.2" ry="1.5"/><ellipse cx="603.82" cy="198.41" rx="1.2" ry="1.5"/><ellipse cx="610.68" cy="197.79" rx="1.2" ry="1.5"/><ellipse cx="581.23" cy="203.37" rx="1.2" ry="1.5"/><ellipse cx="588.13" cy="202.86" rx="1.2" ry="1.5"/><ellipse cx="594.08" cy="203.8" rx="1.2" ry="1.5"/><ellipse cx="601.55" cy="203.6" rx="1.2" ry="1.5"/><ellipse cx="608.58" cy="203.77" rx="1.2" ry="1.5"/><ellipse cx="585.26" cy="209.31" rx="1.2" ry="1.5"/><ellipse cx="592.18" cy="208.32" rx="1.2" ry="1.5"/><ellipse cx="597.6" cy="209.54" rx="1.2" ry="1.5"/></g><path d="M622.75 188.88C622.23 186.58 624.21 183.02 625.88 181C627.54 178.98 630.15 177.54 632.75 176.75C635.35 175.96 638.75 175.58 641.5 176.25C644.25 176.92 647.29 178.54 649.25 180.75C651.21 182.96 652.25 185.96 653.25 189.5C654.25 193.04 655.42 198.21 655.25 202C655.08 205.79 653.92 210 652.25 212.25C650.58 214.5 647.67 216.79 645.25 215.5C642.83 214.21 640.46 207.96 637.75 204.5C635.04 201.04 631.5 197.35 629 194.75C626.5 192.15 623.27 191.17 622.75 188.88Z" fill="#e9573f" stroke="#cd4435" stroke-width="1.5"/><g fill="#f7a82f"><ellipse cx="637.46" cy="178.97" rx="1.2" ry="1.5"/><ellipse cx="634.25" cy="183.63" rx="1.2" ry="1.5"/><ellipse cx="640.89" cy="182.89" rx="1.2" ry="1.5"/><ellipse cx="646.72" cy="183.01" rx="1.2" ry="1.5"/><ellipse cx="625.1" cy="187.94" rx="1.2" ry="1.5"/><ellipse cx="629.97" cy="189.65" rx="1.2" ry="1.5"/><ellipse cx="637.37" cy="189.28" rx="1.2" ry="1.5"/><ellipse cx="643.7" cy="188.68" rx="1.2" ry="1.5"/><ellipse cx="650.68" cy="188.61" rx="1.2" ry="1.5"/><ellipse cx="634.55" cy="194.58" rx="1.2" ry="1.5"/><ellipse cx="640.11" cy="193.8" rx="1.2" ry="1.5"/><ellipse cx="647.83" cy="193.7" rx="1.2" ry="1.5"/><ellipse cx="637.86" cy="199.76" rx="1.2" ry="1.5"/><ellipse cx="644.31" cy="198.85" rx="1.2" ry="1.5"/><ellipse cx="650.85" cy="199.05" rx="1.2" ry="1.5"/><ellipse cx="641.24" cy="204.75" rx="1.2" ry="1.5"/><ellipse cx="647.98" cy="204" rx="1.2" ry="1.5"/><ellipse cx="643.73" cy="209.28" rx="1.2" ry="1.5"/><ellipse cx="649.67" cy="209.05" rx="1.2" ry="1.5"/></g><path d="M641.5 212C640.46 209.71 641.92 203 644 199.5C646.08 196 650.67 192.67 654 191C657.33 189.33 660.25 189.54 664 189.5C667.75 189.46 672.5 190.29 676.5 190.75C680.5 191.21 685.08 191 688 192.25C690.92 193.5 692.75 195.58 694 198.25C695.25 200.92 695.88 204.88 695.5 208.25C695.12 211.62 693.62 215.54 691.75 218.5C689.88 221.46 687.17 224.23 684.25 226C681.33 227.77 677.58 229.33 674.25 229.12C670.92 228.92 667.17 226.73 664.25 224.75C661.33 222.77 659.08 219.17 656.75 217.25C654.42 215.33 652.79 214.12 650.25 213.25C647.71 212.38 642.54 214.29 641.5 212Z" fill="#e9573f" stroke="#cd4435" stroke-width="1.5"/><g fill="#f7a82f"><ellipse cx="663.03" cy="192.18" rx="1.2" ry="1.5"/><ellipse cx="653.83" cy="196.98" rx="1.2" ry="1.5"/><ellipse cx="660.49" cy="197.12" rx="1.2" ry="1.5"/><ellipse cx="666.72" cy="196" rx="1.2" ry="1.5"/><ellipse cx="672.9" cy="197.37" rx="1.2" ry="1.5"/><ellipse cx="678.39" cy="197.71" rx="1.2" ry="1.5"/><ellipse cx="685.22" cy="196.79" rx="1.2" ry="1.5"/><ellipse cx="650.49" cy="201.84" rx="1.2" ry="1.5"/><ellipse cx="656.25" cy="202.19" rx="1.2" ry="1.5"/><ellipse cx="662.53" cy="201.57" rx="1.2" ry="1.5"/><ellipse cx="669.71" cy="202.12" rx="1.2" ry="1.5"/><ellipse cx="675.57" cy="202.43" rx="1.2" ry="1.5"/><ellipse cx="682.19" cy="201.02" rx="1.2" ry="1.5"/><ellipse cx="688.69" cy="201.08" rx="1.2" ry="1.5"/><ellipse cx="645.61" cy="207.65" rx="1.2" ry="1.5"/><ellipse cx="652.68" cy="207.94" rx="1.2" ry="1.5"/><ellipse cx="660" cy="206.24" rx="1.2" ry="1.5"/><ellipse cx="667.08" cy="208.03" rx="1.2" ry="1.5"/><ellipse cx="671.85" cy="207.96" rx="1.2" ry="1.5"/><ellipse cx="679.16" cy="207.1" rx="1.2" ry="1.5"/><ellipse cx="686.85" cy="206.63" rx="1.2" ry="1.5"/><ellipse cx="692.55" cy="208.02" rx="1.2" ry="1.5"/><ellipse cx="656.41" cy="211.52" rx="1.2" ry="1.5"/><ellipse cx="663.05" cy="212.2" rx="1.2" ry="1.5"/><ellipse cx="668.81" cy="211.4" rx="1.2" ry="1.5"/><ellipse cx="676.06" cy="211.54" rx="1.2" ry="1.5"/><ellipse cx="682.49" cy="212.63" rx="1.2" ry="1.5"/><ellipse cx="689.11" cy="211.82" rx="1.2" ry="1.5"/><ellipse cx="660.5" cy="218.35" rx="1.2" ry="1.5"/><ellipse cx="666.57" cy="216.92" rx="1.2" ry="1.5"/><ellipse cx="671.93" cy="218.23" rx="1.2" ry="1.5"/><ellipse cx="679.87" cy="217.69" rx="1.2" ry="1.5"/><ellipse cx="685.62" cy="216.98" rx="1.2" ry="1.5"/><ellipse cx="668.48" cy="221.71" rx="1.2" ry="1.5"/><ellipse cx="675.54" cy="222.44" rx="1.2" ry="1.5"/><ellipse cx="682.85" cy="221.79" rx="1.2" ry="1.5"/></g><path d="M608.75 200.12C609.06 198.1 610.21 194.71 612.12 192.62C614.04 190.54 617.02 189.02 620.25 187.62C623.48 186.23 628.06 184.77 631.5 184.25C634.94 183.73 638.67 183.73 640.88 184.5C643.08 185.27 644.19 186.75 644.75 188.88C645.31 191 644.75 194.19 644.25 197.25C643.75 200.31 643 204.12 641.75 207.25C640.5 210.38 638.83 213.92 636.75 216C634.67 218.08 632 219.54 629.25 219.75C626.5 219.96 622.79 218.71 620.25 217.25C617.71 215.79 615.67 213.08 614 211C612.33 208.92 611.12 206.56 610.25 204.75C609.38 202.94 608.44 202.15 608.75 200.12Z" fill="#e9573f" stroke="#cd4435" stroke-width="1.5"/><path d="M614 206C613.96 203.71 615.25 199.83 617.75 197.25C620.25 194.67 625.25 192.08 629 190.5C632.75 188.92 638.12 187.19 640.25 187.75C642.38 188.31 642.12 191.04 641.75 193.88C641.38 196.71 639.67 201.48 638 204.75C636.33 208.02 634.04 211.83 631.75 213.5C629.46 215.17 626.54 215.17 624.25 214.75C621.96 214.33 619.71 212.46 618 211C616.29 209.54 614.04 208.29 614 206Z" fill="#f7b9af" stroke="#f9d2ca" stroke-width="1.5" stroke-dasharray="1.1 1.4"/><path d="M616.29 205.38C616.25 203.46 617.34 200.2 619.44 198.03C621.54 195.86 625.74 193.69 628.89 192.36C632.04 191.03 636.55 189.58 638.34 190.05C640.12 190.53 639.91 192.82 639.6 195.2C639.28 197.58 637.85 201.59 636.45 204.33C635.05 207.08 633.12 210.28 631.2 211.68C629.27 213.08 626.82 213.08 624.9 212.73C622.97 212.38 621.08 210.81 619.65 209.58C618.21 208.36 616.32 207.31 616.29 205.38Z" fill="#f4998d"/><path d="M576.25 233.5C576.25 231.38 577.29 228.29 579 225.75C580.71 223.21 583.58 220.23 586.5 218.25C589.42 216.27 592.33 214.92 596.5 213.88C600.67 212.83 608.12 211.48 611.5 212C614.88 212.52 615.46 214.5 616.75 217C618.04 219.5 618.75 223.67 619.25 227C619.75 230.33 620.17 234.46 619.75 237C619.33 239.54 618.75 241.17 616.75 242.25C614.75 243.33 611.33 243.29 607.75 243.5C604.17 243.71 599 243.92 595.25 243.5C591.5 243.08 587.96 241.83 585.25 241C582.54 240.17 580.5 239.75 579 238.5C577.5 237.25 576.25 235.62 576.25 233.5Z" fill="#e9573f" stroke="#cd4435" stroke-width="1.5"/><path d="M579 233.25C577.96 231.58 580.46 230.12 582.75 228.25C585.04 226.38 589 223.88 592.75 222C596.5 220.12 601.81 217.94 605.25 217C608.69 216.06 611.71 215.54 613.38 216.38C615.04 217.21 615.15 219.6 615.25 222C615.35 224.4 614.62 228.25 614 230.75C613.38 233.25 613.58 235.65 611.5 237C609.42 238.35 605.25 238.67 601.5 238.88C597.75 239.08 592.75 239.19 589 238.25C585.25 237.31 580.04 234.92 579 233.25Z" fill="#f7b9af" stroke="#f9d2ca" stroke-width="1.5" stroke-dasharray="1.1 1.4"/><path d="M582.43 232.47C581.55 231.07 583.65 229.84 585.58 228.27C587.51 226.7 590.83 224.6 593.98 223.02C597.13 221.44 601.59 219.61 604.48 218.82C607.37 218.03 609.9 217.59 611.3 218.29C612.7 219 612.79 221.01 612.88 223.02C612.97 225.03 612.36 228.27 611.83 230.37C611.31 232.47 611.48 234.48 609.73 235.62C607.98 236.76 604.48 237.02 601.33 237.19C598.18 237.37 593.98 237.46 590.83 236.67C587.68 235.88 583.3 233.87 582.43 232.47Z" fill="#f4998d"/><path d="M647.75 262C647.9 259.67 648 256.79 649.25 254.5C650.5 252.21 652.79 250.12 655.25 248.25C657.71 246.38 661.46 243.67 664 243.25C666.54 242.83 668.38 244.25 670.5 245.75C672.62 247.25 674.88 249.92 676.75 252.25C678.62 254.58 680.83 257.46 681.75 259.75C682.67 262.04 683.08 263.92 682.25 266C681.42 268.08 679.33 270.38 676.75 272.25C674.17 274.12 670.08 276.21 666.75 277.25C663.42 278.29 659.29 278.92 656.75 278.5C654.21 278.08 652.9 276.42 651.5 274.75C650.1 273.08 649 270.62 648.38 268.5C647.75 266.38 647.6 264.33 647.75 262Z" fill="#e9573f" stroke="#cd4435" stroke-width="1.5"/><path d="M651.5 259.5C652.33 257 656.71 252.42 659 250.75C661.29 249.08 663.38 248.88 665.25 249.5C667.12 250.12 668.79 252.42 670.25 254.5C671.71 256.58 673.58 259.71 674 262C674.42 264.29 674.42 266.38 672.75 268.25C671.08 270.12 666.5 272.83 664 273.25C661.5 273.67 659.42 272 657.75 270.75C656.08 269.5 655.04 267.62 654 265.75C652.96 263.88 650.67 262 651.5 259.5Z" fill="#f7b9af" stroke="#f9d2ca" stroke-width="1.5" stroke-dasharray="1.1 1.4"/><path d="M653.37 259.83C654.07 257.73 657.74 253.88 659.67 252.48C661.59 251.08 663.34 250.91 664.92 251.43C666.49 251.96 667.89 253.88 669.12 255.63C670.34 257.38 671.92 260.01 672.27 261.93C672.62 263.86 672.62 265.61 671.22 267.18C669.82 268.76 665.97 271.03 663.87 271.38C661.77 271.73 660.02 270.33 658.62 269.28C657.22 268.23 656.34 266.66 655.47 265.08C654.59 263.51 652.67 261.93 653.37 259.83Z" fill="#f4998d"/><path d="M624 230.75C623.79 228.67 624 226.27 625.25 224.5C626.5 222.73 628.79 221.17 631.5 220.12C634.21 219.08 638.17 218.35 641.5 218.25C644.83 218.15 648.58 218.46 651.5 219.5C654.42 220.54 657.12 222.21 659 224.5C660.88 226.79 662.08 230.29 662.75 233.25C663.42 236.21 663.58 239.5 663 242.25C662.42 245 661.17 248.08 659.25 249.75C657.33 251.42 654.46 252.46 651.5 252.25C648.54 252.04 644.83 250.17 641.5 248.5C638.17 246.83 634 244.17 631.5 242.25C629 240.33 627.75 238.92 626.5 237C625.25 235.08 624.21 232.83 624 230.75Z" fill="#e9573f" stroke="#cd4435" stroke-width="1.5"/><g fill="#f7a82f"><ellipse cx="639.01" cy="221.43" rx="1.2" ry="1.5"/><ellipse cx="644.95" cy="220.55" rx="1.2" ry="1.5"/><ellipse cx="627.99" cy="226.35" rx="1.2" ry="1.5"/><ellipse cx="634.56" cy="224.76" rx="1.2" ry="1.5"/><ellipse cx="642.13" cy="225.57" rx="1.2" ry="1.5"/><ellipse cx="648.97" cy="225.2" rx="1.2" ry="1.5"/><ellipse cx="655.75" cy="224.75" rx="1.2" ry="1.5"/><ellipse cx="632.55" cy="231.13" rx="1.2" ry="1.5"/><ellipse cx="638.27" cy="230.03" rx="1.2" ry="1.5"/><ellipse cx="645.02" cy="231.2" rx="1.2" ry="1.5"/><ellipse cx="651.63" cy="229.98" rx="1.2" ry="1.5"/><ellipse cx="658.92" cy="230.88" rx="1.2" ry="1.5"/><ellipse cx="629.64" cy="236.77" rx="1.2" ry="1.5"/><ellipse cx="636.23" cy="235.77" rx="1.2" ry="1.5"/><ellipse cx="642.61" cy="235.5" rx="1.2" ry="1.5"/><ellipse cx="648.24" cy="235.69" rx="1.2" ry="1.5"/><ellipse cx="656.07" cy="236.68" rx="1.2" ry="1.5"/><ellipse cx="638.09" cy="241.17" rx="1.2" ry="1.5"/><ellipse cx="645.89" cy="241.12" rx="1.2" ry="1.5"/><ellipse cx="652.57" cy="241.17" rx="1.2" ry="1.5"/><ellipse cx="657.85" cy="241.56" rx="1.2" ry="1.5"/><ellipse cx="642.09" cy="246.32" rx="1.2" ry="1.5"/><ellipse cx="649.53" cy="246.49" rx="1.2" ry="1.5"/><ellipse cx="655.81" cy="245.32" rx="1.2" ry="1.5"/></g><path d="M593.38 259.75C593.38 256.17 593.9 252.42 595.25 249.5C596.6 246.58 599.21 243.92 601.5 242.25C603.79 240.58 606.08 239.65 609 239.5C611.92 239.35 615.67 240.12 619 241.38C622.33 242.62 626.04 244.98 629 247C631.96 249.02 634.83 251.17 636.75 253.5C638.67 255.83 640.08 258.5 640.5 261C640.92 263.5 640.5 266 639.25 268.5C638 271 635.75 274.02 633 276C630.25 277.98 626.33 279.44 622.75 280.38C619.17 281.31 615.04 281.94 611.5 281.62C607.96 281.31 604.21 280.27 601.5 278.5C598.79 276.73 596.6 274.12 595.25 271C593.9 267.88 593.38 263.33 593.38 259.75Z" fill="#e9573f" stroke="#cd4435" stroke-width="1.5"/><g fill="#f7a82f"><ellipse cx="609.01" cy="242.04" rx="1.2" ry="1.5"/><ellipse cx="598.88" cy="247.46" rx="1.2" ry="1.5"/><ellipse cx="605.44" cy="247.63" rx="1.2" ry="1.5"/><ellipse cx="612.29" cy="247.13" rx="1.2" ry="1.5"/><ellipse cx="618.02" cy="247.27" rx="1.2" ry="1.5"/><ellipse cx="625.18" cy="246.69" rx="1.2" ry="1.5"/><ellipse cx="600.88" cy="251.85" rx="1.2" ry="1.5"/><ellipse cx="607.66" cy="252.94" rx="1.2" ry="1.5"/><ellipse cx="613.79" cy="251.61" rx="1.2" ry="1.5"/><ellipse cx="620.5" cy="252.29" rx="1.2" ry="1.5"/><ellipse cx="628.43" cy="251.35" rx="1.2" ry="1.5"/><ellipse cx="598.34" cy="257.96" rx="1.2" ry="1.5"/><ellipse cx="603.85" cy="256.36" rx="1.2" ry="1.5"/><ellipse cx="610.74" cy="256.58" rx="1.2" ry="1.5"/><ellipse cx="617.45" cy="257.58" rx="1.2" ry="1.5"/><ellipse cx="624.76" cy="256.59" rx="1.2" ry="1.5"/><ellipse cx="630.54" cy="256.71" rx="1.2" ry="1.5"/><ellipse cx="637.12" cy="257.66" rx="1.2" ry="1.5"/><ellipse cx="602.11" cy="262.25" rx="1.2" ry="1.5"/><ellipse cx="607.6" cy="263.07" rx="1.2" ry="1.5"/><ellipse cx="615.5" cy="261.98" rx="1.2" ry="1.5"/><ellipse cx="621.37" cy="263.21" rx="1.2" ry="1.5"/><ellipse cx="627.84" cy="261.73" rx="1.2" ry="1.5"/><ellipse cx="633.57" cy="263.19" rx="1.2" ry="1.5"/><ellipse cx="598.78" cy="267.21" rx="1.2" ry="1.5"/><ellipse cx="604.83" cy="267.47" rx="1.2" ry="1.5"/><ellipse cx="610.92" cy="268.42" rx="1.2" ry="1.5"/><ellipse cx="618.29" cy="266.92" rx="1.2" ry="1.5"/><ellipse cx="623.6" cy="267.39" rx="1.2" ry="1.5"/><ellipse cx="630.92" cy="268.03" rx="1.2" ry="1.5"/><ellipse cx="601.12" cy="272.11" rx="1.2" ry="1.5"/><ellipse cx="608.81" cy="272.62" rx="1.2" ry="1.5"/><ellipse cx="614.95" cy="273.57" rx="1.2" ry="1.5"/><ellipse cx="620.81" cy="272.66" rx="1.2" ry="1.5"/><ellipse cx="627.18" cy="273.13" rx="1.2" ry="1.5"/><ellipse cx="633.48" cy="273.23" rx="1.2" ry="1.5"/><ellipse cx="603.94" cy="277.28" rx="1.2" ry="1.5"/><ellipse cx="611.81" cy="276.93" rx="1.2" ry="1.5"/><ellipse cx="617.94" cy="277.67" rx="1.2" ry="1.5"/></g></g><rect x="570.2" y="114.5" width="3.8" height="3.8" fill="#939dd2"/><rect x="570.2" y="137.6" width="3.8" height="3.8" fill="#939dd2"/><rect x="570.2" y="160.8" width="3.8" height="3.8" fill="#939dd2"/><rect x="591.85" y="114.5" width="3.8" height="3.8" fill="#939dd2"/><g transform="translate(590.75 136.5)"><circle cx="3" cy="3" r="1.500" fill="none" stroke="#8f97c8" stroke-width="0.900"/><path d="M3 0.300V1.500M3 4.500V5.700M0.300 3H1.500M4.500 3H5.700" stroke="#8f97c8" stroke-width="0.900"/></g><rect x="591.85" y="160.8" width="3.8" height="3.8" fill="#939dd2"/><rect x="613.4" y="114.5" width="3.8" height="3.8" fill="#939dd2"/><rect x="613.4" y="137.6" width="3.8" height="3.8" fill="#939dd2"/><rect x="613.4" y="160.8" width="3.8" height="3.8" fill="#939dd2"/><rect x="344.3" y="399" width="579" height="17.5" fill="#232323"/></svg>
<span id="t29" class="t " style="left:351px;top:404px;font-size:6.5px;line-height:10px;color:#c4c4c4;transform-origin:0 50%;transform:scaleX(0.92);">100 %</span>
<svg class="g" width="1067" height="600" viewBox="0 0 1067 600"><g transform="translate(377.1 406.7)"><path d="M0.600 0.700L2.400 2.600L4.200 0.700" stroke="#9a9a9a" stroke-width="0.800" fill="none"/></g></svg>
<span id="t30" class="t " style="left:394px;top:404px;font-size:6.5px;line-height:10px;color:#c4c4c4;transform-origin:0 50%;transform:scaleX(1.02);">(フル画質)</span>
<svg class="g" width="1067" height="600" viewBox="0 0 1067 600"><g transform="translate(431.1 406.7)"><path d="M0.600 0.700L2.400 2.600L4.200 0.700" stroke="#9a9a9a" stroke-width="0.800" fill="none"/></g><g transform="translate(447.2 404.3)"><rect x="0.600" y="0.600" width="7.200" height="6.600" rx="0.500" fill="none" stroke="#d8d8d8" stroke-width="0.900"/><rect x="2.600" y="2.600" width="3.200" height="2.600" fill="#d8d8d8"/></g><g transform="translate(459.2 404.3)"><rect x="0.600" y="0.600" width="7.200" height="6.600" rx="0.500" fill="none" stroke="#d8d8d8" stroke-width="0.900"/><rect x="2.600" y="2.600" width="3.200" height="2.600" fill="#d8d8d8"/></g><g transform="translate(471.2 404.3)"><rect x="0.600" y="0.600" width="7.200" height="6.600" rx="0.500" fill="none" stroke="#3d8be0" stroke-width="0.900"/><rect x="2.600" y="2.600" width="3.200" height="2.600" fill="#3d8be0"/></g><g transform="translate(483.4 404.3)"><rect x="0.600" y="0.600" width="7.200" height="6.600" rx="0.500" fill="none" stroke="#d8d8d8" stroke-width="0.900"/><rect x="2.600" y="2.600" width="3.200" height="2.600" fill="#d8d8d8"/></g><g transform="translate(495.4 404.3)"><rect x="0.600" y="0.600" width="7.200" height="6.600" rx="0.500" fill="none" stroke="#d8d8d8" stroke-width="0.900"/><rect x="2.600" y="2.600" width="3.200" height="2.600" fill="#d8d8d8"/></g><g transform="translate(513 404)"><circle cx="3" cy="3" r="2" fill="#e2483c"/><circle cx="5.400" cy="3" r="2" fill="#48b04a"/><circle cx="4.200" cy="5.300" r="2" fill="#3f78e0"/></g><g transform="translate(526.4 404.2)"><circle cx="4" cy="4" r="3.300" fill="#d8d8d8"/><circle cx="4" cy="4" r="1.300" fill="#232323"/></g></svg>
<span id="t31" class="t " style="left:537px;top:404px;font-size:6.4px;line-height:10px;color:#3d8be0;transform-origin:0 50%;transform:scaleX(0.89);">+0.0</span>
<svg class="g" width="1067" height="600" viewBox="0 0 1067 600"><g transform="translate(562.5 404.6)"><path d="M0.500 1.800H2.500L3.200 0.700H5.800L6.500 1.800H8.500V6.900H0.500Z" fill="#d8d8d8"/><circle cx="4.500" cy="4.200" r="1.500" fill="#232323"/></g><g transform="translate(576 405)"><path d="M1 6L6 1M3.500 1H6V3.500" stroke="#4a4a4a" stroke-width="0.900" fill="none"/></g><rect x="591" y="403.6" width="40" height="9.6" fill="#2b2b2b" rx="1"/></svg>
<span id="t32" class="t " style="left:597px;top:404px;font-size:6.3px;line-height:10px;color:#6a6a6a;transform-origin:0 50%;transform:scaleX(0.95);">0;00;00;00</span>
<svg class="g" width="1067" height="600" viewBox="0 0 1067 600"><rect x="925.3" y="38.4" width="145.7" height="378.1" fill="#232323"/></svg>
<span id="t33" class="t " style="left:931px;top:42px;font-size:6.4px;line-height:10px;color:#8e8e8e;transform-origin:0 50%;transform:scaleX(1.04);">情報</span>
<span id="t34" class="t " style="left:967.5px;top:42px;font-size:6.4px;line-height:10px;color:#e8e8e8;transform-origin:0 50%;transform:scaleX(0.78);">プレビュー</span>
<svg class="g" width="1067" height="600" viewBox="0 0 1067 600"><rect x="998" y="44.8" width="4.4" height="0.8" fill="#9a9a9a"/><rect x="998" y="46.5" width="4.4" height="0.8" fill="#9a9a9a"/><rect x="998" y="48.2" width="4.4" height="0.8" fill="#9a9a9a"/><rect x="967" y="51.7" width="36.5" height="1.5" fill="#b9b9b9"/></svg>
<span id="t35" class="t " style="left:1016px;top:42px;font-size:6.4px;line-height:10px;color:#8e8e8e;transform-origin:0 50%;">整列</span>
<svg class="g" width="1067" height="600" viewBox="0 0 1067 600"><g transform="translate(1058.6 44)"><path d="M0.7 0.6L2.7 2.6L0.7 4.6M3.6 0.6L5.6 2.6L3.6 4.6" stroke="#dcdcdc" stroke-width="1.1" fill="none"/></g><g transform="translate(950.7 58.3) scale(0.8250 0.8250) translate(0 0)"><rect x="0.600" y="0.800" width="1.300" height="6.400" fill="#dedede"/><path d="M7.400 0.800L2.600 4L7.400 7.200Z" fill="#dedede"/></g><g transform="translate(963.2 58.3) scale(0.8250 0.8250) translate(0 0)"><path d="M5 0.800L0.600 4L5 7.200Z" fill="#dedede"/><rect x="5.800" y="0.800" width="1.400" height="6.400" fill="#dedede"/></g><g transform="translate(977.2 58.3) scale(0.8250 0.8250) translate(0 0)"><path d="M1 0.600L7 4L1 7.400Z" fill="#dedede"/></g><g transform="translate(990.7 58.3) scale(0.8250 0.8250) translate(0 0)"><rect x="0.800" y="0.800" width="1.400" height="6.400" fill="#dedede"/><path d="M3 0.800L7.400 4L3 7.200Z" fill="#dedede"/></g><g transform="translate(1004.2 58.3) scale(0.8250 0.8250) translate(0 0)"><path d="M0.600 0.800L5.400 4L0.600 7.200Z" fill="#dedede"/><rect x="6.100" y="0.800" width="1.300" height="6.400" fill="#dedede"/></g><rect x="927" y="69.7" width="113" height="0.6" fill="#2e2e2e"/></svg>
<span id="t36" class="t " style="left:928px;top:74px;font-size:6.3px;line-height:10px;color:#8e8e8e;transform-origin:0 50%;transform:scaleX(0.72);">ショートカット</span>
<svg class="g" width="1067" height="600" viewBox="0 0 1067 600"><rect x="928" y="84" width="92.5" height="9.6" fill="#1e1e1e" rx="1"/></svg>
<span id="t37" class="t " style="left:932px;top:84px;font-size:6.5px;line-height:10px;color:#b8b8b8;transform-origin:0 50%;">0</span>
<svg class="g" width="1067" height="600" viewBox="0 0 1067 600"><g transform="translate(1013.6 87.4)"><path d="M0.600 0.700L2.400 2.600L4.200 0.700" stroke="#8a8a8a" stroke-width="0.800" fill="none"/></g><g transform="translate(1024.5 84.3)"><path d="M2.300 3.200A3.100 3.100 0 1 1 4.800 8.200H1.200" fill="none" stroke="#dcdcdc" stroke-width="1"/><path d="M0.600 3.800L2.400 1.400L3.800 4Z" fill="#dcdcdc"/></g></svg>
<span id="t38" class="t " style="left:928px;top:98px;font-size:6.3px;line-height:10px;color:#8e8e8e;transform-origin:0 50%;transform:scaleX(0.93);">埋め込み:</span>
<svg class="g" width="1067" height="600" viewBox="0 0 1067 600"><rect x="980.3" y="96.8" width="12.3" height="9.8" fill="#0e1a2e" rx="1"/><rect x="993.4" y="96.8" width="13.2" height="9.8" fill="#0e1a2e" rx="1"/><g transform="translate(981.5 97.8)"><path d="M0.500 4Q5 -0.800 9.500 4Q5 8.800 0.500 4Z" fill="none" stroke="#3d8be0" stroke-width="1.100"/><circle cx="5" cy="4" r="1.500" fill="#3d8be0"/></g><g transform="translate(994.5 97.5)"><path d="M0.600 3H2.600L5.400 0.600V7.900L2.600 5.500H0.600Z" fill="#3d8be0"/><path d="M7 2.300Q8.600 4.250 7 6.200M8.600 1.200Q10.800 4.250 8.600 7.300" fill="none" stroke="#2a62a8" stroke-width="0.900"/></g><g transform="translate(1008.5 97.6)"><rect x="1.400" y="1.400" width="6.200" height="5.800" fill="none" stroke="#dcdcdc" stroke-width="0.900" stroke-dasharray="1.600 0.900"/><path d="M0.300 1.400H1.400V0.300M7.600 0.300V1.400H8.700M8.700 7.200H7.600V8.300M1.400 8.300V7.200H0.300" stroke="#dcdcdc" stroke-width="0.800" fill="none"/></g><g transform="translate(1024.5 97.5)"><path d="M1 4.300V7.600H9V4.300" fill="none" stroke="#dcdcdc" stroke-width="1.100"/><path d="M5 6V1.600M3 3L5 0.800L7 3" fill="none" stroke="#dcdcdc" stroke-width="1.100"/></g><rect x="928.3" y="110.4" width="6.8" height="6.8" fill="none" stroke="#c4c4c4" stroke-width="1" rx="0.6"/></svg>
<span id="t39" class="t " style="left:937.5px;top:109px;font-size:6.3px;line-height:10px;color:#b4b4b4;transform-origin:0 50%;transform:scaleX(0.86);">再生前にキャッシュ</span>
<span id="t40" class="t " style="left:928px;top:122px;font-size:6.3px;line-height:10px;color:#8e8e8e;transform-origin:0 50%;transform:scaleX(1.04);">範囲</span>
<svg class="g" width="1067" height="600" viewBox="0 0 1067 600"><rect x="928" y="131.8" width="107.5" height="9.8" fill="#1e1e1e" rx="1"/></svg>
<span id="t41" class="t " style="left:931.5px;top:132px;font-size:6.3px;line-height:10px;color:#dcdcdc;transform-origin:0 50%;transform:scaleX(0.78);">ワークエリア</span>
<svg class="g" width="1067" height="600" viewBox="0 0 1067 600"><g transform="translate(1028.1 135.3)"><path d="M0.600 0.700L2.400 2.600L4.200 0.700" stroke="#b0b0b0" stroke-width="0.800" fill="none"/></g></svg>
<span id="t42" class="t " style="left:928px;top:144px;font-size:6.3px;line-height:10px;color:#8e8e8e;transform-origin:0 50%;transform:scaleX(1.04);">再生開始の時間</span>
<svg class="g" width="1067" height="600" viewBox="0 0 1067 600"><rect x="928" y="154.7" width="107.5" height="9.8" fill="#1e1e1e" rx="1"/></svg>
<span id="t43" class="t " style="left:931.5px;top:155px;font-size:6.3px;line-height:10px;color:#dcdcdc;transform-origin:0 50%;transform:scaleX(1.08);">現在の時間</span>
<svg class="g" width="1067" height="600" viewBox="0 0 1067 600"><g transform="translate(1028.1 158.2)"><path d="M0.600 0.700L2.400 2.600L4.200 0.700" stroke="#b0b0b0" stroke-width="0.800" fill="none"/></g></svg>
<span id="t44" class="t " style="left:928px;top:166px;font-size:6.3px;line-height:10px;color:#8e8e8e;transform-origin:0 50%;transform:scaleX(0.82);">フレーム</span>
<span id="t45" class="t " style="left:967px;top:166px;font-size:6.3px;line-height:10px;color:#8e8e8e;transform-origin:0 50%;transform:scaleX(0.78);">スキップ</span>
<span id="t46" class="t " style="left:993px;top:166px;font-size:6.3px;line-height:10px;color:#8e8e8e;transform-origin:0 50%;transform:scaleX(1.03);">解像度</span>
<svg class="g" width="1067" height="600" viewBox="0 0 1067 600"><rect x="928" y="176.2" width="34.5" height="9.8" fill="#1e1e1e" rx="1"/></svg>
<span id="t47" class="t " style="left:930.5px;top:177px;font-size:6.4px;line-height:10px;color:#c8c8c8;transform-origin:0 50%;">(29.97)</span>
<svg class="g" width="1067" height="600" viewBox="0 0 1067 600"><g transform="translate(955.1 179.7)"><path d="M0.600 0.700L2.400 2.600L4.200 0.700" stroke="#8a8a8a" stroke-width="0.800" fill="none"/></g><rect x="966.5" y="176.2" width="23" height="9.8" fill="#1e1e1e" rx="1"/></svg>
<span id="t48" class="t " style="left:970.5px;top:177px;font-size:6.4px;line-height:10px;color:#c8c8c8;transform-origin:0 50%;">0</span>
<svg class="g" width="1067" height="600" viewBox="0 0 1067 600"><g transform="translate(982.6 179.7)"><path d="M0.600 0.700L2.400 2.600L4.200 0.700" stroke="#8a8a8a" stroke-width="0.800" fill="none"/></g><rect x="993" y="176.2" width="40.5" height="9.8" fill="#1e1e1e" rx="1"/></svg>
<span id="t49" class="t " style="left:996.5px;top:177px;font-size:6.3px;line-height:10px;color:#dcdcdc;transform-origin:0 50%;transform:scaleX(1.08);">自動</span>
<svg class="g" width="1067" height="600" viewBox="0 0 1067 600"><g transform="translate(1026.1 179.7)"><path d="M0.600 0.700L2.400 2.600L4.200 0.700" stroke="#b0b0b0" stroke-width="0.800" fill="none"/></g><rect x="928.3" y="189.5" width="6.8" height="6.8" fill="none" stroke="#b4b4b4" stroke-width="1" rx="0.6"/></svg>
<span id="t50" class="t " style="left:937.5px;top:188px;font-size:6.3px;line-height:10px;color:#8e8e8e;transform-origin:0 50%;transform:scaleX(0.8);">フルスクリーン</span>
<svg class="g" width="1067" height="600" viewBox="0 0 1067 600"><rect x="927" y="199.3" width="135" height="0.6" fill="#2c2c2c"/></svg>
<span id="t51" class="t " style="left:928px;top:202px;font-size:6.3px;line-height:10px;color:#8e8e8e;transform-origin:0 50%;transform:scaleX(0.94);">(0 での) 停止時:</span>
<svg class="g" width="1067" height="600" viewBox="0 0 1067 600"><rect x="925.3" y="212" width="145.7" height="1.8" fill="#151515"/></svg>
<span id="t52" class="t " style="left:931px;top:218px;font-size:6.3px;line-height:10px;color:#e8e8e8;transform-origin:0 50%;transform:scaleX(0.85);">プロパティ: レイヤー 16</span>
<svg class="g" width="1067" height="600" viewBox="0 0 1067 600"><rect x="995.5" y="221" width="4.4" height="0.8" fill="#9a9a9a"/><rect x="995.5" y="222.7" width="4.4" height="0.8" fill="#9a9a9a"/><rect x="995.5" y="224.4" width="4.4" height="0.8" fill="#9a9a9a"/><rect x="930" y="227.6" width="70.5" height="1.5" fill="#b9b9b9"/></svg>
<span id="t53" class="t " style="left:1013px;top:218px;font-size:6.3px;line-height:10px;color:#8e8e8e;transform-origin:0 50%;transform:scaleX(0.82);">エフェクト&amp;</span>
<svg class="g" width="1067" height="600" viewBox="0 0 1067 600"><g transform="translate(1058.6 220.2)"><path d="M0.7 0.6L2.7 2.6L0.7 4.6M3.6 0.6L5.6 2.6L3.6 4.6" stroke="#dcdcdc" stroke-width="1.1" fill="none"/></g></svg>
<span id="t54" class="t " style="left:931px;top:232px;font-size:6.4px;line-height:10px;color:#e8e8e8;transform-origin:0 50%;transform:scaleX(0.74);">レイヤートランスフ...</span>
<span id="t55" class="t " style="left:995px;top:232px;font-size:6.3px;line-height:10px;color:#3d8be0;transform-origin:0 50%;transform:scaleX(0.62);">リセット</span>
<svg class="g" width="1067" height="600" viewBox="0 0 1067 600"><g transform="translate(937 243.1)"><circle cx="4" cy="4.800" r="2.900" fill="none" stroke="#d2d2d2" stroke-width="0.900"/><path d="M4 0.600V2M2.800 0.700H5.200M4 4.800L5.300 3.300" stroke="#d2d2d2" stroke-width="0.900" fill="none"/></g></svg>
<span id="t56" class="t " style="left:957px;top:243px;font-size:6.3px;line-height:10px;color:#8e8e8e;transform-origin:0 50%;transform:scaleX(0.72);">アンカー...</span>
<span id="t57" class="t " style="left:996px;top:243px;font-size:6.5px;line-height:10px;color:#3d8be0;transform-origin:0 50%;transform:scaleX(0.96);">58.7</span>
<svg class="g" width="1067" height="600" viewBox="0 0 1067 600"><rect x="995.5" y="252" width="15.5" height="0.5" fill="#3a3a3a"/></svg>
<span id="t58" class="t " style="left:1020px;top:243px;font-size:6.5px;line-height:10px;color:#3d8be0;transform-origin:0 50%;transform:scaleX(0.89);">41.8</span>
<svg class="g" width="1067" height="600" viewBox="0 0 1067 600"><rect x="1019.5" y="252" width="14.5" height="0.5" fill="#3a3a3a"/><g transform="translate(937 254)"><circle cx="4" cy="4.800" r="2.900" fill="none" stroke="#d2d2d2" stroke-width="0.900"/><path d="M4 0.600V2M2.800 0.700H5.200M4 4.800L5.300 3.300" stroke="#d2d2d2" stroke-width="0.900" fill="none"/></g></svg>
<span id="t59" class="t " style="left:957px;top:254px;font-size:6.3px;line-height:10px;color:#8e8e8e;transform-origin:0 50%;transform:scaleX(1.08);">位置</span>
<span id="t60" class="t " style="left:996px;top:254px;font-size:6.5px;line-height:10px;color:#d8433c;transform-origin:0 50%;transform:scaleX(0.97);">567.2</span>
<svg class="g" width="1067" height="600" viewBox="0 0 1067 600"><rect x="995.5" y="262.9" width="18.5" height="0.5" fill="#3a3a3a"/></svg>
<span id="t61" class="t " style="left:1020px;top:254px;font-size:6.5px;line-height:10px;color:#d8433c;transform-origin:0 50%;transform:scaleX(0.97);">199.5</span>
<svg class="g" width="1067" height="600" viewBox="0 0 1067 600"><rect x="1019.5" y="262.9" width="18.5" height="0.5" fill="#3a3a3a"/><g transform="translate(937 264.8)"><circle cx="4" cy="4.800" r="2.900" fill="none" stroke="#d2d2d2" stroke-width="0.900"/><path d="M4 0.600V2M2.800 0.700H5.200M4 4.800L5.300 3.300" stroke="#d2d2d2" stroke-width="0.900" fill="none"/></g></svg>
<span id="t62" class="t " style="left:957px;top:264px;font-size:6.3px;line-height:10px;color:#8e8e8e;transform-origin:0 50%;transform:scaleX(0.84);">スケール</span>
<span id="t63" class="t " style="left:996px;top:264px;font-size:6.5px;line-height:10px;color:#3d8be0;transform-origin:0 50%;transform:scaleX(0.91);">100%</span>
<svg class="g" width="1067" height="600" viewBox="0 0 1067 600"><rect x="995.5" y="273.7" width="18.5" height="0.5" fill="#3a3a3a"/></svg>
<span id="t64" class="t " style="left:1020px;top:264px;font-size:6.5px;line-height:10px;color:#3d8be0;transform-origin:0 50%;transform:scaleX(0.91);">100%</span>
<svg class="g" width="1067" height="600" viewBox="0 0 1067 600"><rect x="1019.5" y="273.7" width="18.5" height="0.5" fill="#3a3a3a"/><g transform="translate(982.5 266.8)"><rect x="0.500" y="0.700" width="4" height="3" rx="1.500" fill="none" stroke="#3d8be0" stroke-width="0.900"/><rect x="3.500" y="0.700" width="4" height="3" rx="1.500" fill="none" stroke="#3d8be0" stroke-width="0.900"/></g><g transform="translate(937 276)"><circle cx="4" cy="4.800" r="2.900" fill="none" stroke="#d2d2d2" stroke-width="0.900"/><path d="M4 0.600V2M2.800 0.700H5.200M4 4.800L5.300 3.300" stroke="#d2d2d2" stroke-width="0.900" fill="none"/></g></svg>
<span id="t65" class="t " style="left:957px;top:276px;font-size:6.3px;line-height:10px;color:#8e8e8e;transform-origin:0 50%;transform:scaleX(1.08);">回転</span>
<span id="t66" class="t " style="left:996px;top:276px;font-size:6.5px;line-height:10px;color:#3d8be0;transform-origin:0 50%;transform:scaleX(0.88);">0 x+0 °</span>
<svg class="g" width="1067" height="600" viewBox="0 0 1067 600"><rect x="995.5" y="284.9" width="21.5" height="0.5" fill="#3a3a3a"/><g transform="translate(937 287)"><circle cx="4" cy="4.800" r="2.900" fill="none" stroke="#d2d2d2" stroke-width="0.900"/><path d="M4 0.600V2M2.800 0.700H5.200M4 4.800L5.300 3.300" stroke="#d2d2d2" stroke-width="0.900" fill="none"/></g></svg>
<span id="t67" class="t " style="left:957px;top:287px;font-size:6.3px;line-height:10px;color:#8e8e8e;transform-origin:0 50%;transform:scaleX(1.02);">不透明度</span>
<span id="t68" class="t " style="left:996px;top:287px;font-size:6.5px;line-height:10px;color:#3d8be0;transform-origin:0 50%;transform:scaleX(0.91);">100%</span>
<svg class="g" width="1067" height="600" viewBox="0 0 1067 600"><rect x="995.5" y="295.9" width="18.5" height="0.5" fill="#3a3a3a"/><rect x="-4" y="416.5" width="1075" height="187.5" fill="#232323"/><rect x="15" y="421.4" width="5.6" height="5.6" fill="#cdb77f"/></svg>
<span id="t69" class="t " style="left:27px;top:420px;font-size:6.3px;line-height:10px;color:#858585;transform-origin:0 50%;transform:scaleX(0.91);">MainComp</span>
<svg class="g" width="1067" height="600" viewBox="0 0 1067 600"><rect x="86.5" y="421.4" width="5.6" height="5.6" fill="#cdb77f"/></svg>
<span id="t70" class="t " style="left:97.7px;top:420px;font-size:6.3px;line-height:10px;color:#858585;transform-origin:0 50%;transform:scaleX(0.95);">cut02</span>
<svg class="g" width="1067" height="600" viewBox="0 0 1067 600"><rect x="143.7" y="421.4" width="5.6" height="5.6" fill="#cdb77f"/></svg>
<span id="t71" class="t " style="left:155px;top:420px;font-size:6.3px;line-height:10px;color:#858585;transform-origin:0 50%;transform:scaleX(0.95);">cut01</span>
<svg class="g" width="1067" height="600" viewBox="0 0 1067 600"><rect x="201" y="421.4" width="5.6" height="5.6" fill="#cdb77f"/></svg>
<span id="t72" class="t " style="left:212.3px;top:420px;font-size:6.3px;line-height:10px;color:#858585;transform-origin:0 50%;transform:scaleX(0.96);">cut03</span>
<svg class="g" width="1067" height="600" viewBox="0 0 1067 600"><rect x="258.3" y="421.4" width="5.6" height="5.6" fill="#cdb77f"/></svg>
<span id="t73" class="t " style="left:269.3px;top:420px;font-size:6.3px;line-height:10px;color:#858585;transform-origin:0 50%;transform:scaleX(0.88);">CuttingBoard</span>
<svg class="g" width="1067" height="600" viewBox="0 0 1067 600"><rect x="334.5" y="421.4" width="5.6" height="5.6" fill="#cdb77f"/></svg>
<span id="t74" class="t " style="left:346px;top:420px;font-size:6.3px;line-height:10px;color:#858585;transform-origin:0 50%;transform:scaleX(0.95);">cut04</span>
<svg class="g" width="1067" height="600" viewBox="0 0 1067 600"><rect x="391.3" y="421.4" width="5.6" height="5.6" fill="#cdb77f"/></svg>
<span id="t75" class="t " style="left:402.3px;top:420px;font-size:6.3px;line-height:10px;color:#858585;transform-origin:0 50%;transform:scaleX(0.95);">cut05</span>
<svg class="g" width="1067" height="600" viewBox="0 0 1067 600"><rect x="449" y="421.4" width="5.6" height="5.6" fill="#cdb77f"/></svg>
<span id="t76" class="t " style="left:460px;top:420px;font-size:6.3px;line-height:10px;color:#858585;transform-origin:0 50%;transform:scaleX(0.95);">cut06</span>
<svg class="g" width="1067" height="600" viewBox="0 0 1067 600"><rect x="506" y="421.4" width="5.6" height="5.6" fill="#cdb77f"/></svg>
<span id="t77" class="t " style="left:517.3px;top:420px;font-size:6.3px;line-height:10px;color:#858585;transform-origin:0 50%;transform:scaleX(0.95);">cut07</span>
<svg class="g" width="1067" height="600" viewBox="0 0 1067 600"><g transform="translate(553.5 422.4)"><path d="M0.600 0.600L3.400 3.400M3.400 0.600L0.600 3.400" stroke="#8a8a8a" stroke-width="0.700"/></g><rect x="563" y="421.4" width="5.6" height="5.6" fill="#d6c089"/></svg>
<span id="t78" class="t " style="left:574px;top:420px;font-size:6.4px;line-height:10px;color:#f0f0f0;transform-origin:0 50%;transform:scaleX(0.89);">strawberries</span>
<svg class="g" width="1067" height="600" viewBox="0 0 1067 600"><rect x="611.6" y="422.7" width="4.4" height="0.8" fill="#c4c4c4"/><rect x="611.6" y="424.4" width="4.4" height="0.8" fill="#c4c4c4"/><rect x="611.6" y="426.1" width="4.4" height="0.8" fill="#c4c4c4"/><rect x="553.6" y="430" width="62.8" height="1.5" fill="#c6c6c6"/></svg>
<span id="t79" class="t b" style="left:10px;top:432px;font-size:9.2px;line-height:14px;color:#2f8ae6;transform-origin:0 50%;transform:scaleX(0.94);">0;00;00;00</span>
<span id="t80" class="t " style="left:7px;top:441px;font-size:5.4px;line-height:10px;color:#295f9e;transform-origin:0 50%;transform:scaleX(1.16);">00000 (29.97 fps)</span>
<svg class="g" width="1067" height="600" viewBox="0 0 1067 600"><rect x="63.6" y="434.4" width="340.2" height="12.4" fill="#161616" rx="1"/><g transform="translate(66 437)"><circle cx="4.300" cy="2.900" r="2.100" stroke="#d0d0d0" stroke-width="0.900" fill="none"/><path d="M2.800 4.400L0.800 6.600" stroke="#d0d0d0" stroke-width="1"/><circle cx="8.400" cy="5.300" r="0.700" fill="#d0d0d0"/></g><g transform="translate(414.5 436.5)"><path d="M0.500 2H6.500M2 4.500H7.500M6 7L8.500 4.500L6 2.500" stroke="#d2d2d2" stroke-width="1" fill="none"/></g><g transform="translate(432.5 436.5)"><path d="M0.500 7.500H9M1.800 6.400Q1.800 2.400 4.750 2.400Q7.700 2.400 7.700 6.400Z" fill="#d2d2d2"/><circle cx="4.750" cy="1.700" r="1.100" fill="#d2d2d2"/></g><g transform="translate(447 436)"><rect x="2.600" y="0.600" width="6" height="6.600" fill="#d2d2d2"/><rect x="0.600" y="2.600" width="6" height="6.600" fill="#8c8c8c" stroke="#232323" stroke-width="0.600"/></g><g transform="translate(461.5 436.3)"><ellipse cx="5" cy="4.750" rx="4.300" ry="2.500" transform="rotate(-35 5 4.750)" fill="none" stroke="#d2d2d2" stroke-width="1.500"/><ellipse cx="5" cy="4.750" rx="2.400" ry="0.900" transform="rotate(-35 5 4.750)" fill="#8c8c8c"/></g><g transform="translate(481 436.5)"><rect x="0.600" y="0.600" width="8.200" height="7.600" rx="0.600" fill="none" stroke="#d2d2d2" stroke-width="0.900"/><path d="M1.200 1.200L8.200 7.600" stroke="#d2d2d2" stroke-width="0.900"/></g><g transform="translate(3.6 455)"><path d="M0.300 2.600Q3.600 -1 6.900 2.600Q3.600 6.200 0.300 2.600Z" fill="#cfcfcf"/><circle cx="3.600" cy="2.600" r="1.250" fill="#222"/></g><g transform="translate(11.8 454.3)"><path d="M0.500 2.300H2L4 0.600V6L2 4.300H0.500Z" fill="#cfcfcf"/><path d="M5 1.700Q6.400 3.300 5 4.900" stroke="#cfcfcf" stroke-width="0.800" fill="none"/></g><g transform="translate(20.8 455.4)"><circle cx="2.200" cy="2.200" r="1.700" fill="#cfcfcf"/></g><g transform="translate(28.5 454)"><path d="M1.800 3.200V2.300Q1.800 0.700 3.500 0.700Q5.200 0.700 5.200 2.300V3.200" stroke="#cfcfcf" stroke-width="0.900" fill="none"/><rect x="0.800" y="3.100" width="5.400" height="3.600" rx="0.500" fill="#cfcfcf"/></g><g transform="translate(45.5 453.8)"><path d="M0.600 0.600H4L7.900 4.400L4.600 7.400L0.600 3.600Z" fill="#cfcfcf"/><circle cx="2.200" cy="2.200" r="0.800" fill="#232323"/></g></svg>
<span id="t81" class="t " style="left:59.8px;top:453px;font-size:6px;line-height:10px;color:#7a7a7a;transform-origin:0 50%;">#</span>
<span id="t82" class="t " style="left:78px;top:453px;font-size:6.6px;line-height:10px;color:#cecece;transform-origin:0 50%;transform:scaleX(0.92);">レイヤー名</span>
<svg class="g" width="1067" height="600" viewBox="0 0 1067 600"><g transform="translate(173.4 454.9) scale(0.9000 0.9000) translate(0 0)"><path d="M0.500 5.200H7.500M1.500 4.200Q1.500 1 4 1Q6.500 1 6.500 4.200Z" fill="#bdbdbd" stroke="#bdbdbd" stroke-width="0.700"/></g><g transform="translate(183.2 454.6)"><path d="M2.750 0.400L3.500 2.200L5.200 2.400L4 3.600L4.300 5.400L2.750 4.500L1.200 5.400L1.500 3.600L0.300 2.400L2 2.200Z" fill="#bdbdbd"/></g><g transform="translate(190 454.1)"><path d="M0.800 0.600L7.200 6.400" stroke="#cfcfcf" stroke-width="1" fill="none"/></g></svg>
<span id="t83" class="t " style="left:198.7px;top:453px;font-size:6.5px;line-height:10px;color:#bdbdbd;transform-origin:0 50%;transform:scaleX(1.36);font-style:italic;">fx</span>
<svg class="g" width="1067" height="600" viewBox="0 0 1067 600"><g transform="translate(207 454.2)"><rect x="0.500" y="0.500" width="6.400" height="5.800" fill="none" stroke="#d4d4d4" stroke-width="1"/><rect x="2" y="2" width="3.400" height="2.800" fill="#d4d4d4"/></g><g transform="translate(215.5 454.1)"><ellipse cx="4" cy="3.500" rx="3.500" ry="2.200" transform="rotate(-35 4 3.500)" fill="#a8a8a8"/></g><g transform="translate(224.5 454.3)"><circle cx="3.400" cy="3.300" r="2.900" fill="none" stroke="#d4d4d4" stroke-width="0.800"/><path d="M3.400 0.400A2.900 2.900 0 0 1 3.400 6.200Z" fill="#d4d4d4"/></g><g transform="translate(232.5 454.3)"><path d="M3.750 0.500L7 2.100V4.500L3.750 6.100L0.500 4.500V2.100Z" fill="none" stroke="#9a9a9a" stroke-width="0.800"/></g></svg>
<span id="t84" class="t " style="left:249.3px;top:453px;font-size:6.6px;line-height:10px;color:#cecece;transform-origin:0 50%;transform:scaleX(0.91);">モード</span>
<span id="t85" class="t " style="left:323.3px;top:453px;font-size:6px;line-height:10px;color:#8a8a8a;transform-origin:0 50%;">T</span>
<span id="t86" class="t " style="left:331px;top:453px;font-size:6.6px;line-height:10px;color:#cecece;transform-origin:0 50%;transform:scaleX(0.77);">トラックマット</span>
<svg class="g" width="1067" height="600" viewBox="0 0 1067 600"><g transform="translate(408 454.3)"><rect x="0.400" y="0.400" width="6" height="5.800" rx="0.600" fill="#e0e0e0"/><rect x="2" y="2" width="2.800" height="2.600" fill="#232323"/></g><g transform="translate(416.2 454.3)"><rect x="0.400" y="0.400" width="6" height="5.800" rx="0.600" fill="#e0e0e0"/><path d="M2 5V2H4.800" stroke="#232323" stroke-width="0.900" fill="none"/></g></svg>
<span id="t87" class="t " style="left:428px;top:453px;font-size:6.6px;line-height:10px;color:#cecece;transform-origin:0 50%;transform:scaleX(0.86);">親とリンク</span>
<svg class="g" width="1067" height="600" viewBox="0 0 1067 600"><rect x="-4" y="463.1" width="502.5" height="9.3" fill="#3c3c3c"/><g transform="translate(3.6 465.15)"><path d="M0.300 2.600Q3.600 -1 6.900 2.600Q3.600 6.200 0.300 2.600Z" fill="#e0e0e0"/><circle cx="3.600" cy="2.600" r="1.250" fill="#222"/></g><rect x="12.5" y="464.35" width="6.6" height="6.8" fill="#363636"/><rect x="20.5" y="464.35" width="6.6" height="6.8" fill="#363636"/><rect x="28.5" y="464.35" width="6.6" height="6.8" fill="#363636"/><g transform="translate(41 465.95)"><path d="M0.600 0.800L2.400 2.800L4.200 0.800" stroke="#9a9a9a" stroke-width="0.800" fill="none"/></g><rect x="48" y="463.45" width="8.2" height="8.6" fill="#b8b7ec"/></svg>
<span id="t88" class="t " style="left:60.3px;top:463px;font-size:6.4px;line-height:10px;color:#a8a8a8;transform-origin:0 50%;">1</span>
<svg class="g" width="1067" height="600" viewBox="0 0 1067 600"><g transform="translate(76.6 463.35)"><path d="M0.3 0.3H5.2L7.100 2.200V8.500H0.300Z" fill="#4a1f06"/><path d="M1.500 2.400Q2.400 3.200 3.700 1.600Q5 3.200 5.900 2.400V4.600Q5.900 7 3.700 7.300Q1.500 7 1.500 4.600Z" fill="#f08030"/><circle cx="3.700" cy="5.300" r="0.900" fill="#5a2408"/></g><rect x="86.45" y="463.7" width="82.7" height="8.1" fill="#4e4e4e" stroke="#d8d8d8" stroke-width="0.9"/></svg>
<span id="t89" class="t " style="left:88.5px;top:463px;font-size:6.4px;line-height:10px;color:#bdbdbd;transform-origin:0 50%;transform:scaleX(0.94);">レイヤー 16</span>
<svg class="g" width="1067" height="600" viewBox="0 0 1067 600"><rect x="170.5" y="463.05" width="78" height="9.4" fill="#474747"/><g transform="translate(173.4 465.05) scale(0.9000 0.9000) translate(0 0)"><path d="M0.500 5.200H7.500M1.500 4.200Q1.500 1 4 1Q6.500 1 6.500 4.200Z" fill="#a2a2a2" stroke="#a2a2a2" stroke-width="0.700"/></g><g transform="translate(190 464.25)"><path d="M0.800 6.400L7.200 0.600" stroke="#d6d6d6" stroke-width="1" fill="none"/></g><rect x="215" y="464.35" width="6.8" height="6.8" fill="#3f3f3f"/><rect x="223.3" y="464.35" width="6.8" height="6.8" fill="#3f3f3f"/><rect x="231.6" y="464.35" width="6.8" height="6.8" fill="#3f3f3f"/><rect x="249" y="463.35" width="64.5" height="8.8" fill="#1d1d1d"/></svg>
<span id="t90" class="t " style="left:252px;top:463px;font-size:6.4px;line-height:10px;color:#dcdcdc;transform-origin:0 50%;transform:scaleX(1.11);">通常</span>
<svg class="g" width="1067" height="600" viewBox="0 0 1067 600"><g transform="translate(308.4 466.35)"><path d="M0.600 0.700L2.400 2.600L4.200 0.700" stroke="#a8a8a8" stroke-width="0.800" fill="none"/></g><rect x="317.2" y="464.15" width="10" height="7.2" fill="#3f3f3f"/><rect x="329" y="463.35" width="76.5" height="8.8" fill="#1d1d1d"/><g transform="translate(329.8 464.25)"><circle cx="3.500" cy="3.500" r="2.800" fill="none" stroke="#8a8a8a" stroke-width="0.800"/><path d="M3.500 3.500Q5 2.200 4 1.800Q2 1.800 2 3.500Q2 5 3.500 5" fill="none" stroke="#8a8a8a" stroke-width="0.700"/></g></svg>
<span id="t91" class="t " style="left:341px;top:463px;font-size:6.4px;line-height:10px;color:#dcdcdc;transform-origin:0 50%;transform:scaleX(0.86);">マットなし</span>
<svg class="g" width="1067" height="600" viewBox="0 0 1067 600"><g transform="translate(398.6 466.35)"><path d="M0.600 0.700L2.400 2.600L4.200 0.700" stroke="#a8a8a8" stroke-width="0.800" fill="none"/></g><rect x="406.5" y="463.35" width="30.5" height="8.8" fill="#4a4a4a"/><g transform="translate(427.2 464.25)"><circle cx="3.500" cy="3.500" r="2.800" fill="none" stroke="#8a8a8a" stroke-width="0.800"/><path d="M3.500 3.500Q5 2.200 4 1.800Q2 1.800 2 3.500Q2 5 3.500 5" fill="none" stroke="#8a8a8a" stroke-width="0.700"/></g><rect x="437.5" y="463.35" width="50" height="8.8" fill="#1d1d1d"/></svg>
<span id="t92" class="t " style="left:441px;top:463px;font-size:6.4px;line-height:10px;color:#dcdcdc;transform-origin:0 50%;transform:scaleX(0.96);">なし</span>
<svg class="g" width="1067" height="600" viewBox="0 0 1067 600"><g transform="translate(480.6 466.35)"><path d="M0.600 0.700L2.400 2.600L4.200 0.700" stroke="#a8a8a8" stroke-width="0.800" fill="none"/></g><rect x="488.5" y="463.35" width="10" height="8.8" fill="#4a4a4a"/><rect x="-4" y="472.6" width="502.5" height="39.6" fill="#232323"/><g transform="translate(62.3 476.5)"><path d="M0.600 0.800L2.400 2.800L4.200 0.800" stroke="#8a8a8a" stroke-width="0.800" fill="none"/></g><g transform="translate(70 473.6)"><circle cx="4" cy="5" r="3" fill="none" stroke="#dcdcdc" stroke-width="0.900"/><path d="M4 0.800V2.200M2.800 0.900H5.200" stroke="#dcdcdc" stroke-width="0.900" fill="none"/></g><rect x="80" y="473.4" width="90" height="9.8" fill="#4b4b4b"/></svg>
<span id="t93" class="t " style="left:83px;top:474px;font-size:6.4px;line-height:10px;color:#e4e4e4;transform-origin:0 50%;transform:scaleX(0.89);">位置</span>
<span id="t94" class="t " style="left:173px;top:474px;font-size:6.4px;line-height:10px;color:#d8433c;transform-origin:0 50%;transform:scaleX(0.88);">567.2, 199.5</span>
<svg class="g" width="1067" height="600" viewBox="0 0 1067 600"><g transform="translate(434 474.7)"><circle cx="3.500" cy="3.500" r="2.800" fill="none" stroke="#8a8a8a" stroke-width="0.800"/><path d="M3.500 3.500Q5 2.200 4 1.800Q2 1.800 2 3.500Q2 5 3.500 5" fill="none" stroke="#8a8a8a" stroke-width="0.700"/></g><rect x="184.2" y="486.2" width="5.2" height="1.2" fill="#3d8be0"/><rect x="184.2" y="488.5" width="5.2" height="1.2" fill="#3d8be0"/><g transform="translate(191.8 484.4)"><path d="M0.800 0.600V6.200H6.400" stroke="#cfcfcf" stroke-width="0.900" fill="none"/><path d="M1.500 5L3.300 2.600L4.600 4L6.200 1.800" stroke="#9a9a9a" stroke-width="0.800" fill="none"/></g><g transform="translate(200.5 484.5)"><circle cx="3.500" cy="3.500" r="2.800" fill="none" stroke="#8a8a8a" stroke-width="0.800"/><path d="M3.500 3.500Q5 2.200 4 1.800Q2 1.800 2 3.500Q2 5 3.500 5" fill="none" stroke="#8a8a8a" stroke-width="0.700"/></g><g transform="translate(209.8 484.2)"><circle cx="3.800" cy="3.800" r="3.400" fill="#e4e4e4"/><path d="M2.900 2.200L5.500 3.800L2.900 5.400Z" fill="#232323"/></g></svg>
<span id="t95" class="t " style="left:83px;top:493px;font-size:6.4px;line-height:10px;color:#dedede;transform-origin:0 50%;transform:scaleX(0.94);">エクスプレッション : 位置</span>
<svg class="g" width="1067" height="600" viewBox="0 0 1067 600"><rect x="-4" y="512.2" width="502.5" height="77.2" fill="#1d1d1d"/><rect x="-4" y="512.7" width="502.5" height="9.56" fill="#323232"/><g transform="translate(3.6 514.88)"><path d="M0.300 2.600Q3.600 -1 6.900 2.600Q3.600 6.200 0.300 2.600Z" fill="#e0e0e0"/><circle cx="3.600" cy="2.600" r="1.250" fill="#222"/></g><rect x="20.5" y="514.08" width="6.6" height="6.8" fill="#2a2a2a"/><rect x="28.5" y="514.08" width="6.6" height="6.8" fill="#2a2a2a"/><g transform="translate(41.5 515.08)"><path d="M0.800 0.600L2.800 2.400L0.800 4.200" stroke="#8a8a8a" stroke-width="0.800" fill="none"/></g><rect x="48" y="513.18" width="8.2" height="8.6" fill="#b8b7ec"/></svg>
<span id="t96" class="t " style="left:60.3px;top:513px;font-size:6.4px;line-height:10px;color:#a8a8a8;transform-origin:0 50%;">2</span>
<svg class="g" width="1067" height="600" viewBox="0 0 1067 600"><g transform="translate(76.6 513.08)"><path d="M0.3 0.3H5.2L7.100 2.200V8.500H0.300Z" fill="#4a1f06"/><path d="M1.500 2.400Q2.400 3.200 3.700 1.600Q5 3.200 5.900 2.400V4.600Q5.900 7 3.700 7.300Q1.500 7 1.500 4.600Z" fill="#f08030"/><circle cx="3.700" cy="5.300" r="0.900" fill="#5a2408"/></g></svg>
<span id="t97" class="t " style="left:88.5px;top:513px;font-size:6.4px;line-height:10px;color:#d4d4d4;transform-origin:0 50%;transform:scaleX(0.94);">レイヤー 15</span>
<svg class="g" width="1067" height="600" viewBox="0 0 1067 600"><g transform="translate(173.4 514.78) scale(0.9000 0.9000) translate(0 0)"><path d="M0.500 5.200H7.500M1.500 4.200Q1.500 1 4 1Q6.500 1 6.500 4.200Z" fill="#a2a2a2" stroke="#a2a2a2" stroke-width="0.700"/></g><g transform="translate(190 513.98)"><path d="M0.800 6.400L7.200 0.600" stroke="#d6d6d6" stroke-width="1" fill="none"/></g><rect x="215" y="514.08" width="6.8" height="6.8" fill="#3a3a3a"/><rect x="223.3" y="514.08" width="6.8" height="6.8" fill="#3a3a3a"/><rect x="231.6" y="514.08" width="6.8" height="6.8" fill="#3a3a3a"/><rect x="249" y="513.08" width="64.5" height="8.8" fill="#1d1d1d"/></svg>
<span id="t98" class="t " style="left:252px;top:513px;font-size:6.4px;line-height:10px;color:#dcdcdc;transform-origin:0 50%;transform:scaleX(1.11);">通常</span>
<svg class="g" width="1067" height="600" viewBox="0 0 1067 600"><g transform="translate(308.4 516.08)"><path d="M0.600 0.700L2.400 2.600L4.200 0.700" stroke="#a8a8a8" stroke-width="0.800" fill="none"/></g><rect x="317.2" y="513.88" width="10" height="7.2" fill="#3a3a3a"/><rect x="329" y="513.08" width="76.5" height="8.8" fill="#1d1d1d"/><g transform="translate(329.8 513.98)"><circle cx="3.500" cy="3.500" r="2.800" fill="none" stroke="#8a8a8a" stroke-width="0.800"/><path d="M3.500 3.500Q5 2.200 4 1.800Q2 1.800 2 3.500Q2 5 3.500 5" fill="none" stroke="#8a8a8a" stroke-width="0.700"/></g></svg>
<span id="t99" class="t " style="left:341px;top:513px;font-size:6.4px;line-height:10px;color:#dcdcdc;transform-origin:0 50%;transform:scaleX(0.86);">マットなし</span>
<svg class="g" width="1067" height="600" viewBox="0 0 1067 600"><g transform="translate(398.6 516.08)"><path d="M0.600 0.700L2.400 2.600L4.200 0.700" stroke="#a8a8a8" stroke-width="0.800" fill="none"/></g><rect x="406.5" y="513.08" width="30.5" height="8.8" fill="#383838"/><g transform="translate(427.2 513.98)"><circle cx="3.500" cy="3.500" r="2.800" fill="none" stroke="#8a8a8a" stroke-width="0.800"/><path d="M3.500 3.500Q5 2.200 4 1.800Q2 1.800 2 3.500Q2 5 3.500 5" fill="none" stroke="#8a8a8a" stroke-width="0.700"/></g><rect x="437.5" y="513.08" width="50" height="8.8" fill="#1d1d1d"/></svg>
<span id="t100" class="t " style="left:441px;top:513px;font-size:6.4px;line-height:10px;color:#dcdcdc;transform-origin:0 50%;transform:scaleX(0.96);">なし</span>
<svg class="g" width="1067" height="600" viewBox="0 0 1067 600"><g transform="translate(480.6 516.08)"><path d="M0.600 0.700L2.400 2.600L4.200 0.700" stroke="#a8a8a8" stroke-width="0.800" fill="none"/></g><rect x="488.5" y="513.08" width="10" height="8.8" fill="#383838"/><rect x="-4" y="523.26" width="502.5" height="9.56" fill="#323232"/><g transform="translate(3.6 525.44)"><path d="M0.300 2.600Q3.600 -1 6.900 2.600Q3.600 6.200 0.300 2.600Z" fill="#e0e0e0"/><circle cx="3.600" cy="2.600" r="1.250" fill="#222"/></g><rect x="20.5" y="524.64" width="6.6" height="6.8" fill="#2a2a2a"/><rect x="28.5" y="524.64" width="6.6" height="6.8" fill="#2a2a2a"/><g transform="translate(41.5 525.64)"><path d="M0.800 0.600L2.800 2.400L0.800 4.200" stroke="#8a8a8a" stroke-width="0.800" fill="none"/></g><rect x="48" y="523.74" width="8.2" height="8.6" fill="#b8b7ec"/></svg>
<span id="t101" class="t " style="left:60.3px;top:524px;font-size:6.4px;line-height:10px;color:#a8a8a8;transform-origin:0 50%;">3</span>
<svg class="g" width="1067" height="600" viewBox="0 0 1067 600"><g transform="translate(76.6 523.64)"><path d="M0.3 0.3H5.2L7.100 2.200V8.500H0.300Z" fill="#4a1f06"/><path d="M1.500 2.400Q2.400 3.200 3.700 1.600Q5 3.200 5.900 2.400V4.600Q5.900 7 3.700 7.300Q1.500 7 1.500 4.600Z" fill="#f08030"/><circle cx="3.700" cy="5.300" r="0.900" fill="#5a2408"/></g></svg>
<span id="t102" class="t " style="left:88.5px;top:524px;font-size:6.4px;line-height:10px;color:#d4d4d4;transform-origin:0 50%;transform:scaleX(0.94);">レイヤー 14</span>
<svg class="g" width="1067" height="600" viewBox="0 0 1067 600"><g transform="translate(173.4 525.34) scale(0.9000 0.9000) translate(0 0)"><path d="M0.500 5.200H7.500M1.500 4.200Q1.500 1 4 1Q6.500 1 6.500 4.200Z" fill="#a2a2a2" stroke="#a2a2a2" stroke-width="0.700"/></g><g transform="translate(190 524.54)"><path d="M0.800 6.400L7.200 0.600" stroke="#d6d6d6" stroke-width="1" fill="none"/></g><rect x="215" y="524.64" width="6.8" height="6.8" fill="#3a3a3a"/><rect x="223.3" y="524.64" width="6.8" height="6.8" fill="#3a3a3a"/><rect x="231.6" y="524.64" width="6.8" height="6.8" fill="#3a3a3a"/><rect x="249" y="523.64" width="64.5" height="8.8" fill="#1d1d1d"/></svg>
<span id="t103" class="t " style="left:252px;top:524px;font-size:6.4px;line-height:10px;color:#dcdcdc;transform-origin:0 50%;transform:scaleX(1.11);">通常</span>
<svg class="g" width="1067" height="600" viewBox="0 0 1067 600"><g transform="translate(308.4 526.64)"><path d="M0.600 0.700L2.400 2.600L4.200 0.700" stroke="#a8a8a8" stroke-width="0.800" fill="none"/></g><rect x="317.2" y="524.44" width="10" height="7.2" fill="#3a3a3a"/><rect x="329" y="523.64" width="76.5" height="8.8" fill="#1d1d1d"/><g transform="translate(329.8 524.54)"><circle cx="3.500" cy="3.500" r="2.800" fill="none" stroke="#8a8a8a" stroke-width="0.800"/><path d="M3.500 3.500Q5 2.200 4 1.800Q2 1.800 2 3.500Q2 5 3.500 5" fill="none" stroke="#8a8a8a" stroke-width="0.700"/></g></svg>
<span id="t104" class="t " style="left:341px;top:524px;font-size:6.4px;line-height:10px;color:#dcdcdc;transform-origin:0 50%;transform:scaleX(0.86);">マットなし</span>
<svg class="g" width="1067" height="600" viewBox="0 0 1067 600"><g transform="translate(398.6 526.64)"><path d="M0.600 0.700L2.400 2.600L4.200 0.700" stroke="#a8a8a8" stroke-width="0.800" fill="none"/></g><rect x="406.5" y="523.64" width="30.5" height="8.8" fill="#383838"/><g transform="translate(427.2 524.54)"><circle cx="3.500" cy="3.500" r="2.800" fill="none" stroke="#8a8a8a" stroke-width="0.800"/><path d="M3.500 3.500Q5 2.200 4 1.800Q2 1.800 2 3.500Q2 5 3.500 5" fill="none" stroke="#8a8a8a" stroke-width="0.700"/></g><rect x="437.5" y="523.64" width="50" height="8.8" fill="#1d1d1d"/></svg>
<span id="t105" class="t " style="left:441px;top:524px;font-size:6.4px;line-height:10px;color:#dcdcdc;transform-origin:0 50%;transform:scaleX(0.96);">なし</span>
<svg class="g" width="1067" height="600" viewBox="0 0 1067 600"><g transform="translate(480.6 526.64)"><path d="M0.600 0.700L2.400 2.600L4.200 0.700" stroke="#a8a8a8" stroke-width="0.800" fill="none"/></g><rect x="488.5" y="523.64" width="10" height="8.8" fill="#383838"/><rect x="-4" y="533.82" width="502.5" height="9.56" fill="#323232"/><g transform="translate(3.6 536)"><path d="M0.300 2.600Q3.600 -1 6.900 2.600Q3.600 6.200 0.300 2.600Z" fill="#e0e0e0"/><circle cx="3.600" cy="2.600" r="1.250" fill="#222"/></g><rect x="20.5" y="535.2" width="6.6" height="6.8" fill="#2a2a2a"/><rect x="28.5" y="535.2" width="6.6" height="6.8" fill="#2a2a2a"/><g transform="translate(41.5 536.2)"><path d="M0.800 0.600L2.800 2.400L0.800 4.200" stroke="#8a8a8a" stroke-width="0.800" fill="none"/></g><rect x="48" y="534.3" width="8.2" height="8.6" fill="#b8b7ec"/></svg>
<span id="t106" class="t " style="left:60.3px;top:534px;font-size:6.4px;line-height:10px;color:#a8a8a8;transform-origin:0 50%;">4</span>
<svg class="g" width="1067" height="600" viewBox="0 0 1067 600"><g transform="translate(76.6 534.2)"><path d="M0.3 0.3H5.2L7.100 2.200V8.500H0.300Z" fill="#4a1f06"/><path d="M1.500 2.400Q2.400 3.200 3.700 1.600Q5 3.200 5.900 2.400V4.600Q5.900 7 3.700 7.300Q1.500 7 1.500 4.600Z" fill="#f08030"/><circle cx="3.700" cy="5.300" r="0.900" fill="#5a2408"/></g></svg>
<span id="t107" class="t " style="left:88.5px;top:534px;font-size:6.4px;line-height:10px;color:#d4d4d4;transform-origin:0 50%;transform:scaleX(0.94);">レイヤー 13</span>
<svg class="g" width="1067" height="600" viewBox="0 0 1067 600"><g transform="translate(173.4 535.9) scale(0.9000 0.9000) translate(0 0)"><path d="M0.500 5.200H7.500M1.500 4.200Q1.500 1 4 1Q6.500 1 6.500 4.200Z" fill="#a2a2a2" stroke="#a2a2a2" stroke-width="0.700"/></g><g transform="translate(190 535.1)"><path d="M0.800 6.400L7.200 0.600" stroke="#d6d6d6" stroke-width="1" fill="none"/></g><rect x="215" y="535.2" width="6.8" height="6.8" fill="#3a3a3a"/><rect x="223.3" y="535.2" width="6.8" height="6.8" fill="#3a3a3a"/><rect x="231.6" y="535.2" width="6.8" height="6.8" fill="#3a3a3a"/><rect x="249" y="534.2" width="64.5" height="8.8" fill="#1d1d1d"/></svg>
<span id="t108" class="t " style="left:252px;top:534px;font-size:6.4px;line-height:10px;color:#dcdcdc;transform-origin:0 50%;transform:scaleX(1.11);">通常</span>
<svg class="g" width="1067" height="600" viewBox="0 0 1067 600"><g transform="translate(308.4 537.2)"><path d="M0.600 0.700L2.400 2.600L4.200 0.700" stroke="#a8a8a8" stroke-width="0.800" fill="none"/></g><rect x="317.2" y="535" width="10" height="7.2" fill="#3a3a3a"/><rect x="329" y="534.2" width="76.5" height="8.8" fill="#1d1d1d"/><g transform="translate(329.8 535.1)"><circle cx="3.500" cy="3.500" r="2.800" fill="none" stroke="#8a8a8a" stroke-width="0.800"/><path d="M3.500 3.500Q5 2.200 4 1.800Q2 1.800 2 3.500Q2 5 3.500 5" fill="none" stroke="#8a8a8a" stroke-width="0.700"/></g></svg>
<span id="t109" class="t " style="left:341px;top:534px;font-size:6.4px;line-height:10px;color:#dcdcdc;transform-origin:0 50%;transform:scaleX(0.86);">マットなし</span>
<svg class="g" width="1067" height="600" viewBox="0 0 1067 600"><g transform="translate(398.6 537.2)"><path d="M0.600 0.700L2.400 2.600L4.200 0.700" stroke="#a8a8a8" stroke-width="0.800" fill="none"/></g><rect x="406.5" y="534.2" width="30.5" height="8.8" fill="#383838"/><g transform="translate(427.2 535.1)"><circle cx="3.500" cy="3.500" r="2.800" fill="none" stroke="#8a8a8a" stroke-width="0.800"/><path d="M3.500 3.500Q5 2.200 4 1.800Q2 1.800 2 3.500Q2 5 3.500 5" fill="none" stroke="#8a8a8a" stroke-width="0.700"/></g><rect x="437.5" y="534.2" width="50" height="8.8" fill="#1d1d1d"/></svg>
<span id="t110" class="t " style="left:441px;top:534px;font-size:6.4px;line-height:10px;color:#dcdcdc;transform-origin:0 50%;transform:scaleX(0.96);">なし</span>
<svg class="g" width="1067" height="600" viewBox="0 0 1067 600"><g transform="translate(480.6 537.2)"><path d="M0.600 0.700L2.400 2.600L4.200 0.700" stroke="#a8a8a8" stroke-width="0.800" fill="none"/></g><rect x="488.5" y="534.2" width="10" height="8.8" fill="#383838"/><rect x="-4" y="544.38" width="502.5" height="9.56" fill="#323232"/><g transform="translate(3.6 546.56)"><path d="M0.300 2.600Q3.600 -1 6.900 2.600Q3.600 6.200 0.300 2.600Z" fill="#e0e0e0"/><circle cx="3.600" cy="2.600" r="1.250" fill="#222"/></g><rect x="20.5" y="545.76" width="6.6" height="6.8" fill="#2a2a2a"/><rect x="28.5" y="545.76" width="6.6" height="6.8" fill="#2a2a2a"/><g transform="translate(41.5 546.76)"><path d="M0.800 0.600L2.800 2.400L0.800 4.200" stroke="#8a8a8a" stroke-width="0.800" fill="none"/></g><rect x="48" y="544.86" width="8.2" height="8.6" fill="#b8b7ec"/></svg>
<span id="t111" class="t " style="left:60.3px;top:545px;font-size:6.4px;line-height:10px;color:#a8a8a8;transform-origin:0 50%;">5</span>
<svg class="g" width="1067" height="600" viewBox="0 0 1067 600"><g transform="translate(76.6 544.76)"><path d="M0.3 0.3H5.2L7.100 2.200V8.500H0.300Z" fill="#4a1f06"/><path d="M1.500 2.400Q2.400 3.200 3.700 1.600Q5 3.200 5.900 2.400V4.600Q5.900 7 3.700 7.300Q1.500 7 1.500 4.600Z" fill="#f08030"/><circle cx="3.700" cy="5.300" r="0.900" fill="#5a2408"/></g></svg>
<span id="t112" class="t " style="left:88.5px;top:545px;font-size:6.4px;line-height:10px;color:#d4d4d4;transform-origin:0 50%;transform:scaleX(0.94);">レイヤー 12</span>
<svg class="g" width="1067" height="600" viewBox="0 0 1067 600"><g transform="translate(173.4 546.46) scale(0.9000 0.9000) translate(0 0)"><path d="M0.500 5.200H7.500M1.500 4.200Q1.500 1 4 1Q6.500 1 6.500 4.200Z" fill="#a2a2a2" stroke="#a2a2a2" stroke-width="0.700"/></g><g transform="translate(190 545.66)"><path d="M0.800 6.400L7.200 0.600" stroke="#d6d6d6" stroke-width="1" fill="none"/></g><rect x="215" y="545.76" width="6.8" height="6.8" fill="#3a3a3a"/><rect x="223.3" y="545.76" width="6.8" height="6.8" fill="#3a3a3a"/><rect x="231.6" y="545.76" width="6.8" height="6.8" fill="#3a3a3a"/><rect x="249" y="544.76" width="64.5" height="8.8" fill="#1d1d1d"/></svg>
<span id="t113" class="t " style="left:252px;top:545px;font-size:6.4px;line-height:10px;color:#dcdcdc;transform-origin:0 50%;transform:scaleX(1.11);">通常</span>
<svg class="g" width="1067" height="600" viewBox="0 0 1067 600"><g transform="translate(308.4 547.76)"><path d="M0.600 0.700L2.400 2.600L4.200 0.700" stroke="#a8a8a8" stroke-width="0.800" fill="none"/></g><rect x="317.2" y="545.56" width="10" height="7.2" fill="#3a3a3a"/><rect x="329" y="544.76" width="76.5" height="8.8" fill="#1d1d1d"/><g transform="translate(329.8 545.66)"><circle cx="3.500" cy="3.500" r="2.800" fill="none" stroke="#8a8a8a" stroke-width="0.800"/><path d="M3.500 3.500Q5 2.200 4 1.800Q2 1.800 2 3.500Q2 5 3.500 5" fill="none" stroke="#8a8a8a" stroke-width="0.700"/></g></svg>
<span id="t114" class="t " style="left:341px;top:545px;font-size:6.4px;line-height:10px;color:#dcdcdc;transform-origin:0 50%;transform:scaleX(0.86);">マットなし</span>
<svg class="g" width="1067" height="600" viewBox="0 0 1067 600"><g transform="translate(398.6 547.76)"><path d="M0.600 0.700L2.400 2.600L4.200 0.700" stroke="#a8a8a8" stroke-width="0.800" fill="none"/></g><rect x="406.5" y="544.76" width="30.5" height="8.8" fill="#383838"/><g transform="translate(427.2 545.66)"><circle cx="3.500" cy="3.500" r="2.800" fill="none" stroke="#8a8a8a" stroke-width="0.800"/><path d="M3.500 3.500Q5 2.200 4 1.800Q2 1.800 2 3.500Q2 5 3.500 5" fill="none" stroke="#8a8a8a" stroke-width="0.700"/></g><rect x="437.5" y="544.76" width="50" height="8.8" fill="#1d1d1d"/></svg>
<span id="t115" class="t " style="left:441px;top:545px;font-size:6.4px;line-height:10px;color:#dcdcdc;transform-origin:0 50%;transform:scaleX(0.96);">なし</span>
<svg class="g" width="1067" height="600" viewBox="0 0 1067 600"><g transform="translate(480.6 547.76)"><path d="M0.600 0.700L2.400 2.600L4.200 0.700" stroke="#a8a8a8" stroke-width="0.800" fill="none"/></g><rect x="488.5" y="544.76" width="10" height="8.8" fill="#383838"/><rect x="-4" y="554.94" width="502.5" height="9.56" fill="#323232"/><g transform="translate(3.6 557.12)"><path d="M0.300 2.600Q3.600 -1 6.900 2.600Q3.600 6.200 0.300 2.600Z" fill="#e0e0e0"/><circle cx="3.600" cy="2.600" r="1.250" fill="#222"/></g><rect x="20.5" y="556.32" width="6.6" height="6.8" fill="#2a2a2a"/><rect x="28.5" y="556.32" width="6.6" height="6.8" fill="#2a2a2a"/><g transform="translate(41.5 557.32)"><path d="M0.800 0.600L2.800 2.400L0.800 4.200" stroke="#8a8a8a" stroke-width="0.800" fill="none"/></g><rect x="48" y="555.42" width="8.2" height="8.6" fill="#b8b7ec"/></svg>
<span id="t116" class="t " style="left:60.3px;top:555px;font-size:6.4px;line-height:10px;color:#a8a8a8;transform-origin:0 50%;">6</span>
<svg class="g" width="1067" height="600" viewBox="0 0 1067 600"><g transform="translate(76.6 555.32)"><path d="M0.3 0.3H5.2L7.100 2.200V8.500H0.300Z" fill="#4a1f06"/><path d="M1.500 2.400Q2.400 3.200 3.700 1.600Q5 3.200 5.900 2.400V4.600Q5.900 7 3.700 7.300Q1.500 7 1.500 4.600Z" fill="#f08030"/><circle cx="3.700" cy="5.300" r="0.900" fill="#5a2408"/></g></svg>
<span id="t117" class="t " style="left:88.5px;top:555px;font-size:6.4px;line-height:10px;color:#d4d4d4;transform-origin:0 50%;transform:scaleX(0.94);">レイヤー 11</span>
<svg class="g" width="1067" height="600" viewBox="0 0 1067 600"><g transform="translate(173.4 557.02) scale(0.9000 0.9000) translate(0 0)"><path d="M0.500 5.200H7.500M1.500 4.200Q1.500 1 4 1Q6.500 1 6.500 4.200Z" fill="#a2a2a2" stroke="#a2a2a2" stroke-width="0.700"/></g><g transform="translate(190 556.22)"><path d="M0.800 6.400L7.200 0.600" stroke="#d6d6d6" stroke-width="1" fill="none"/></g><rect x="215" y="556.32" width="6.8" height="6.8" fill="#3a3a3a"/><rect x="223.3" y="556.32" width="6.8" height="6.8" fill="#3a3a3a"/><rect x="231.6" y="556.32" width="6.8" height="6.8" fill="#3a3a3a"/><rect x="249" y="555.32" width="64.5" height="8.8" fill="#1d1d1d"/></svg>
<span id="t118" class="t " style="left:252px;top:555px;font-size:6.4px;line-height:10px;color:#dcdcdc;transform-origin:0 50%;transform:scaleX(1.11);">通常</span>
<svg class="g" width="1067" height="600" viewBox="0 0 1067 600"><g transform="translate(308.4 558.32)"><path d="M0.600 0.700L2.400 2.600L4.200 0.700" stroke="#a8a8a8" stroke-width="0.800" fill="none"/></g><rect x="317.2" y="556.12" width="10" height="7.2" fill="#3a3a3a"/><rect x="329" y="555.32" width="76.5" height="8.8" fill="#1d1d1d"/><g transform="translate(329.8 556.22)"><circle cx="3.500" cy="3.500" r="2.800" fill="none" stroke="#8a8a8a" stroke-width="0.800"/><path d="M3.500 3.500Q5 2.200 4 1.800Q2 1.800 2 3.500Q2 5 3.500 5" fill="none" stroke="#8a8a8a" stroke-width="0.700"/></g></svg>
<span id="t119" class="t " style="left:341px;top:555px;font-size:6.4px;line-height:10px;color:#dcdcdc;transform-origin:0 50%;transform:scaleX(0.86);">マットなし</span>
<svg class="g" width="1067" height="600" viewBox="0 0 1067 600"><g transform="translate(398.6 558.32)"><path d="M0.600 0.700L2.400 2.600L4.200 0.700" stroke="#a8a8a8" stroke-width="0.800" fill="none"/></g><rect x="406.5" y="555.32" width="30.5" height="8.8" fill="#383838"/><g transform="translate(427.2 556.22)"><circle cx="3.500" cy="3.500" r="2.800" fill="none" stroke="#8a8a8a" stroke-width="0.800"/><path d="M3.500 3.500Q5 2.200 4 1.800Q2 1.800 2 3.500Q2 5 3.500 5" fill="none" stroke="#8a8a8a" stroke-width="0.700"/></g><rect x="437.5" y="555.32" width="50" height="8.8" fill="#1d1d1d"/></svg>
<span id="t120" class="t " style="left:441px;top:555px;font-size:6.4px;line-height:10px;color:#dcdcdc;transform-origin:0 50%;transform:scaleX(0.96);">なし</span>
<svg class="g" width="1067" height="600" viewBox="0 0 1067 600"><g transform="translate(480.6 558.32)"><path d="M0.600 0.700L2.400 2.600L4.200 0.700" stroke="#a8a8a8" stroke-width="0.800" fill="none"/></g><rect x="488.5" y="555.32" width="10" height="8.8" fill="#383838"/><rect x="-4" y="565.5" width="502.5" height="9.56" fill="#323232"/><g transform="translate(3.6 567.68)"><path d="M0.300 2.600Q3.600 -1 6.900 2.600Q3.600 6.200 0.300 2.600Z" fill="#e0e0e0"/><circle cx="3.600" cy="2.600" r="1.250" fill="#222"/></g><rect x="20.5" y="566.88" width="6.6" height="6.8" fill="#2a2a2a"/><rect x="28.5" y="566.88" width="6.6" height="6.8" fill="#2a2a2a"/><g transform="translate(41.5 567.88)"><path d="M0.800 0.600L2.800 2.400L0.800 4.200" stroke="#8a8a8a" stroke-width="0.800" fill="none"/></g><rect x="48" y="565.98" width="8.2" height="8.6" fill="#b8b7ec"/></svg>
<span id="t121" class="t " style="left:60.3px;top:566px;font-size:6.4px;line-height:10px;color:#a8a8a8;transform-origin:0 50%;">7</span>
<svg class="g" width="1067" height="600" viewBox="0 0 1067 600"><g transform="translate(76.6 565.88)"><path d="M0.3 0.3H5.2L7.100 2.200V8.500H0.300Z" fill="#4a1f06"/><path d="M1.500 2.400Q2.400 3.200 3.700 1.600Q5 3.200 5.900 2.400V4.600Q5.900 7 3.700 7.300Q1.500 7 1.500 4.600Z" fill="#f08030"/><circle cx="3.700" cy="5.300" r="0.900" fill="#5a2408"/></g></svg>
<span id="t122" class="t " style="left:88.5px;top:566px;font-size:6.4px;line-height:10px;color:#d4d4d4;transform-origin:0 50%;transform:scaleX(0.94);">レイヤー 10</span>
<svg class="g" width="1067" height="600" viewBox="0 0 1067 600"><g transform="translate(173.4 567.58) scale(0.9000 0.9000) translate(0 0)"><path d="M0.500 5.200H7.500M1.500 4.200Q1.500 1 4 1Q6.500 1 6.500 4.200Z" fill="#a2a2a2" stroke="#a2a2a2" stroke-width="0.700"/></g><g transform="translate(190 566.78)"><path d="M0.800 6.400L7.200 0.600" stroke="#d6d6d6" stroke-width="1" fill="none"/></g><rect x="215" y="566.88" width="6.8" height="6.8" fill="#3a3a3a"/><rect x="223.3" y="566.88" width="6.8" height="6.8" fill="#3a3a3a"/><rect x="231.6" y="566.88" width="6.8" height="6.8" fill="#3a3a3a"/><rect x="249" y="565.88" width="64.5" height="8.8" fill="#1d1d1d"/></svg>
<span id="t123" class="t " style="left:252px;top:566px;font-size:6.4px;line-height:10px;color:#dcdcdc;transform-origin:0 50%;transform:scaleX(1.11);">通常</span>
<svg class="g" width="1067" height="600" viewBox="0 0 1067 600"><g transform="translate(308.4 568.88)"><path d="M0.600 0.700L2.400 2.600L4.200 0.700" stroke="#a8a8a8" stroke-width="0.800" fill="none"/></g><rect x="317.2" y="566.68" width="10" height="7.2" fill="#3a3a3a"/><rect x="329" y="565.88" width="76.5" height="8.8" fill="#1d1d1d"/><g transform="translate(329.8 566.78)"><circle cx="3.500" cy="3.500" r="2.800" fill="none" stroke="#8a8a8a" stroke-width="0.800"/><path d="M3.500 3.500Q5 2.200 4 1.800Q2 1.800 2 3.500Q2 5 3.500 5" fill="none" stroke="#8a8a8a" stroke-width="0.700"/></g></svg>
<span id="t124" class="t " style="left:341px;top:566px;font-size:6.4px;line-height:10px;color:#dcdcdc;transform-origin:0 50%;transform:scaleX(0.86);">マットなし</span>
<svg class="g" width="1067" height="600" viewBox="0 0 1067 600"><g transform="translate(398.6 568.88)"><path d="M0.600 0.700L2.400 2.600L4.200 0.700" stroke="#a8a8a8" stroke-width="0.800" fill="none"/></g><rect x="406.5" y="565.88" width="30.5" height="8.8" fill="#383838"/><g transform="translate(427.2 566.78)"><circle cx="3.500" cy="3.500" r="2.800" fill="none" stroke="#8a8a8a" stroke-width="0.800"/><path d="M3.500 3.500Q5 2.200 4 1.800Q2 1.800 2 3.500Q2 5 3.500 5" fill="none" stroke="#8a8a8a" stroke-width="0.700"/></g><rect x="437.5" y="565.88" width="50" height="8.8" fill="#1d1d1d"/></svg>
<span id="t125" class="t " style="left:441px;top:566px;font-size:6.4px;line-height:10px;color:#dcdcdc;transform-origin:0 50%;transform:scaleX(0.96);">なし</span>
<svg class="g" width="1067" height="600" viewBox="0 0 1067 600"><g transform="translate(480.6 568.88)"><path d="M0.600 0.700L2.400 2.600L4.200 0.700" stroke="#a8a8a8" stroke-width="0.800" fill="none"/></g><rect x="488.5" y="565.88" width="10" height="8.8" fill="#383838"/><rect x="-4" y="576.06" width="502.5" height="9.56" fill="#323232"/><g transform="translate(3.6 578.24)"><path d="M0.300 2.600Q3.600 -1 6.900 2.600Q3.600 6.200 0.300 2.600Z" fill="#e0e0e0"/><circle cx="3.600" cy="2.600" r="1.250" fill="#222"/></g><rect x="20.5" y="577.44" width="6.6" height="6.8" fill="#2a2a2a"/><rect x="28.5" y="577.44" width="6.6" height="6.8" fill="#2a2a2a"/><g transform="translate(41.5 578.44)"><path d="M0.800 0.600L2.800 2.400L0.800 4.200" stroke="#8a8a8a" stroke-width="0.800" fill="none"/></g><rect x="48" y="576.54" width="8.2" height="8.6" fill="#b8b7ec"/></svg>
<span id="t126" class="t " style="left:60.3px;top:576px;font-size:6.4px;line-height:10px;color:#a8a8a8;transform-origin:0 50%;">8</span>
<svg class="g" width="1067" height="600" viewBox="0 0 1067 600"><g transform="translate(76.6 576.44)"><path d="M0.3 0.3H5.2L7.100 2.200V8.500H0.300Z" fill="#4a1f06"/><path d="M1.500 2.400Q2.400 3.200 3.700 1.600Q5 3.200 5.900 2.400V4.600Q5.900 7 3.700 7.300Q1.500 7 1.500 4.600Z" fill="#f08030"/><circle cx="3.700" cy="5.300" r="0.900" fill="#5a2408"/></g></svg>
<span id="t127" class="t " style="left:88.5px;top:576px;font-size:6.4px;line-height:10px;color:#d4d4d4;transform-origin:0 50%;transform:scaleX(0.94);">レイヤー 9</span>
<svg class="g" width="1067" height="600" viewBox="0 0 1067 600"><g transform="translate(173.4 578.14) scale(0.9000 0.9000) translate(0 0)"><path d="M0.500 5.200H7.500M1.500 4.200Q1.500 1 4 1Q6.500 1 6.500 4.200Z" fill="#a2a2a2" stroke="#a2a2a2" stroke-width="0.700"/></g><g transform="translate(190 577.34)"><path d="M0.800 6.400L7.200 0.600" stroke="#d6d6d6" stroke-width="1" fill="none"/></g><rect x="215" y="577.44" width="6.8" height="6.8" fill="#3a3a3a"/><rect x="223.3" y="577.44" width="6.8" height="6.8" fill="#3a3a3a"/><rect x="231.6" y="577.44" width="6.8" height="6.8" fill="#3a3a3a"/><rect x="249" y="576.44" width="64.5" height="8.8" fill="#1d1d1d"/></svg>
<span id="t128" class="t " style="left:252px;top:576px;font-size:6.4px;line-height:10px;color:#dcdcdc;transform-origin:0 50%;transform:scaleX(1.11);">通常</span>
<svg class="g" width="1067" height="600" viewBox="0 0 1067 600"><g transform="translate(308.4 579.44)"><path d="M0.600 0.700L2.400 2.600L4.200 0.700" stroke="#a8a8a8" stroke-width="0.800" fill="none"/></g><rect x="317.2" y="577.24" width="10" height="7.2" fill="#3a3a3a"/><rect x="329" y="576.44" width="76.5" height="8.8" fill="#1d1d1d"/><g transform="translate(329.8 577.34)"><circle cx="3.500" cy="3.500" r="2.800" fill="none" stroke="#8a8a8a" stroke-width="0.800"/><path d="M3.500 3.500Q5 2.200 4 1.800Q2 1.800 2 3.500Q2 5 3.500 5" fill="none" stroke="#8a8a8a" stroke-width="0.700"/></g></svg>
<span id="t129" class="t " style="left:341px;top:576px;font-size:6.4px;line-height:10px;color:#dcdcdc;transform-origin:0 50%;transform:scaleX(0.86);">マットなし</span>
<svg class="g" width="1067" height="600" viewBox="0 0 1067 600"><g transform="translate(398.6 579.44)"><path d="M0.600 0.700L2.400 2.600L4.200 0.700" stroke="#a8a8a8" stroke-width="0.800" fill="none"/></g><rect x="406.5" y="576.44" width="30.5" height="8.8" fill="#383838"/><g transform="translate(427.2 577.34)"><circle cx="3.500" cy="3.500" r="2.800" fill="none" stroke="#8a8a8a" stroke-width="0.800"/><path d="M3.500 3.500Q5 2.200 4 1.800Q2 1.800 2 3.500Q2 5 3.500 5" fill="none" stroke="#8a8a8a" stroke-width="0.700"/></g><rect x="437.5" y="576.44" width="50" height="8.8" fill="#1d1d1d"/></svg>
<span id="t130" class="t " style="left:441px;top:576px;font-size:6.4px;line-height:10px;color:#dcdcdc;transform-origin:0 50%;transform:scaleX(0.96);">なし</span>
<svg class="g" width="1067" height="600" viewBox="0 0 1067 600"><g transform="translate(480.6 579.44)"><path d="M0.600 0.700L2.400 2.600L4.200 0.700" stroke="#a8a8a8" stroke-width="0.800" fill="none"/></g><rect x="488.5" y="576.44" width="10" height="8.8" fill="#383838"/><rect x="-4" y="586.62" width="502.5" height="9.56" fill="#323232"/><g transform="translate(3.6 588.8)"><path d="M0.300 2.600Q3.600 -1 6.900 2.600Q3.600 6.200 0.300 2.600Z" fill="#e0e0e0"/><circle cx="3.600" cy="2.600" r="1.250" fill="#222"/></g><rect x="20.5" y="588" width="6.6" height="6.8" fill="#2a2a2a"/><rect x="28.5" y="588" width="6.6" height="6.8" fill="#2a2a2a"/><g transform="translate(41.5 589)"><path d="M0.800 0.600L2.800 2.400L0.800 4.200" stroke="#8a8a8a" stroke-width="0.800" fill="none"/></g><rect x="48" y="587.1" width="8.2" height="8.6" fill="#b8b7ec"/></svg>
<span id="t131" class="t " style="left:60.3px;top:587px;font-size:6.4px;line-height:10px;color:#a8a8a8;transform-origin:0 50%;">9</span>
<svg class="g" width="1067" height="600" viewBox="0 0 1067 600"><g transform="translate(76.6 587)"><path d="M0.3 0.3H5.2L7.100 2.200V8.500H0.300Z" fill="#4a1f06"/><path d="M1.500 2.400Q2.400 3.200 3.700 1.600Q5 3.200 5.900 2.400V4.600Q5.900 7 3.700 7.300Q1.500 7 1.500 4.600Z" fill="#f08030"/><circle cx="3.700" cy="5.300" r="0.900" fill="#5a2408"/></g></svg>
<span id="t132" class="t " style="left:88.5px;top:587px;font-size:6.4px;line-height:10px;color:#d4d4d4;transform-origin:0 50%;transform:scaleX(0.94);">レイヤー 8</span>
<svg class="g" width="1067" height="600" viewBox="0 0 1067 600"><g transform="translate(173.4 588.7) scale(0.9000 0.9000) translate(0 0)"><path d="M0.500 5.200H7.500M1.500 4.200Q1.500 1 4 1Q6.500 1 6.500 4.200Z" fill="#a2a2a2" stroke="#a2a2a2" stroke-width="0.700"/></g><g transform="translate(190 587.9)"><path d="M0.800 6.400L7.200 0.600" stroke="#d6d6d6" stroke-width="1" fill="none"/></g><rect x="215" y="588" width="6.8" height="6.8" fill="#3a3a3a"/><rect x="223.3" y="588" width="6.8" height="6.8" fill="#3a3a3a"/><rect x="231.6" y="588" width="6.8" height="6.8" fill="#3a3a3a"/><rect x="249" y="587" width="64.5" height="8.8" fill="#1d1d1d"/></svg>
<span id="t133" class="t " style="left:252px;top:587px;font-size:6.4px;line-height:10px;color:#dcdcdc;transform-origin:0 50%;transform:scaleX(1.11);">通常</span>
<svg class="g" width="1067" height="600" viewBox="0 0 1067 600"><g transform="translate(308.4 590)"><path d="M0.600 0.700L2.400 2.600L4.200 0.700" stroke="#a8a8a8" stroke-width="0.800" fill="none"/></g><rect x="317.2" y="587.8" width="10" height="7.2" fill="#3a3a3a"/><rect x="329" y="587" width="76.5" height="8.8" fill="#1d1d1d"/><g transform="translate(329.8 587.9)"><circle cx="3.500" cy="3.500" r="2.800" fill="none" stroke="#8a8a8a" stroke-width="0.800"/><path d="M3.500 3.500Q5 2.200 4 1.800Q2 1.800 2 3.500Q2 5 3.500 5" fill="none" stroke="#8a8a8a" stroke-width="0.700"/></g></svg>
<span id="t134" class="t " style="left:341px;top:587px;font-size:6.4px;line-height:10px;color:#dcdcdc;transform-origin:0 50%;transform:scaleX(0.86);">マットなし</span>
<svg class="g" width="1067" height="600" viewBox="0 0 1067 600"><g transform="translate(398.6 590)"><path d="M0.600 0.700L2.400 2.600L4.200 0.700" stroke="#a8a8a8" stroke-width="0.800" fill="none"/></g><rect x="406.5" y="587" width="30.5" height="8.8" fill="#383838"/><g transform="translate(427.2 587.9)"><circle cx="3.500" cy="3.500" r="2.800" fill="none" stroke="#8a8a8a" stroke-width="0.800"/><path d="M3.500 3.500Q5 2.200 4 1.800Q2 1.800 2 3.500Q2 5 3.500 5" fill="none" stroke="#8a8a8a" stroke-width="0.700"/></g><rect x="437.5" y="587" width="50" height="8.8" fill="#1d1d1d"/></svg>
<span id="t135" class="t " style="left:441px;top:587px;font-size:6.4px;line-height:10px;color:#dcdcdc;transform-origin:0 50%;transform:scaleX(0.96);">なし</span>
<svg class="g" width="1067" height="600" viewBox="0 0 1067 600"><g transform="translate(480.6 590)"><path d="M0.600 0.700L2.400 2.600L4.200 0.700" stroke="#a8a8a8" stroke-width="0.800" fill="none"/></g><rect x="488.5" y="587" width="10" height="8.8" fill="#383838"/><rect x="-4" y="589.4" width="1075" height="7.2" fill="#232323"/><g transform="translate(3.5 590.2)"><rect x="0.500" y="0.500" width="4" height="4" fill="none" stroke="#3d8be0" stroke-width="1"/><rect x="2" y="2" width="3.500" height="3.500" fill="#3d8be0"/></g><g transform="translate(16.5 590.2)"><circle cx="3" cy="3" r="2.300" fill="none" stroke="#3d8be0" stroke-width="1"/><circle cx="4.200" cy="3.800" r="1.500" fill="#3d8be0"/></g><g transform="translate(27.5 590.2)"><circle cx="3" cy="3" r="2.300" fill="none" stroke="#b0b0b0" stroke-width="1.200"/><circle cx="3" cy="3" r="0.700" fill="#b0b0b0"/></g><g transform="translate(36.5 590.4)"><path d="M0.500 5V1.500H3L4 0.600H6.500V5Z" fill="#b8b8b8"/></g></svg>
<span id="t136" class="t " style="left:60px;top:589px;font-size:6.3px;line-height:10px;color:#c8c8c8;transform-origin:0 50%;transform:scaleX(0.83);">フレームレンダリング時間</span>
<span id="t137" class="t " style="left:127px;top:588px;font-size:6.2px;line-height:10px;color:#9fae56;transform-origin:0 50%;transform:scaleX(0.9);">93ms</span>
<svg class="g" width="1067" height="600" viewBox="0 0 1067 600"><g transform="translate(501.5 591.5)"><path d="M0.300 3.200L2 0.800L3.200 2.200L4 1.400L5.700 3.200Z" fill="#cfcfcf"/></g><rect x="513" y="593.3" width="28" height="0.8" fill="#4a4a4a"/><g transform="translate(513.2 590.6)"><circle cx="3.200" cy="3.200" r="2.300" fill="#232323" stroke="#d8d8d8" stroke-width="1.200"/></g><g transform="translate(546.5 590.3)"><path d="M0.300 5.200L3.200 0.600L5 3.200L6.400 1.600L9.200 5.200Z" fill="#cfcfcf"/></g><rect x="498.5" y="432" width="4.5" height="164.6" fill="#1e1e1e"/><rect x="503" y="432" width="568" height="20" fill="#212121"/><rect x="503" y="436" width="550.5" height="4.3" fill="#6c6c6c"/><rect x="499.8" y="435.8" width="3.4" height="4.7" fill="#3d8be0" rx="1"/><rect x="1052.8" y="435.8" width="3.4" height="4.7" fill="#3d8be0" rx="1"/><rect x="503" y="440.3" width="553.5" height="11.5" fill="#1e1e1e"/></svg>
<span id="t138" class="t " style="left:504px;top:440px;font-size:5.8px;line-height:10px;color:#b4b4b4;transform-origin:0 50%;transform:scaleX(0.94);">00f</span>
<svg class="g" width="1067" height="600" viewBox="0 0 1067 600"><rect x="533.73" y="448.6" width="0.6" height="2.9" fill="#8a8a8a"/></svg>
<span id="t139" class="t " style="left:530.23px;top:440px;font-size:5.8px;line-height:10px;color:#b4b4b4;transform-origin:0 50%;transform:scaleX(1.07);">05f</span>
<svg class="g" width="1067" height="600" viewBox="0 0 1067 600"><rect x="564.26" y="448.6" width="0.6" height="2.9" fill="#8a8a8a"/></svg>
<span id="t140" class="t " style="left:560.76px;top:440px;font-size:5.8px;line-height:10px;color:#b4b4b4;transform-origin:0 50%;transform:scaleX(1.07);">10f</span>
<svg class="g" width="1067" height="600" viewBox="0 0 1067 600"><rect x="594.79" y="448.6" width="0.6" height="2.9" fill="#8a8a8a"/></svg>
<span id="t141" class="t " style="left:591.29px;top:440px;font-size:5.8px;line-height:10px;color:#b4b4b4;transform-origin:0 50%;transform:scaleX(1.07);">15f</span>
<svg class="g" width="1067" height="600" viewBox="0 0 1067 600"><rect x="625.32" y="448.6" width="0.6" height="2.9" fill="#8a8a8a"/></svg>
<span id="t142" class="t " style="left:621.82px;top:440px;font-size:5.8px;line-height:10px;color:#b4b4b4;transform-origin:0 50%;transform:scaleX(1.07);">20f</span>
<svg class="g" width="1067" height="600" viewBox="0 0 1067 600"><rect x="655.85" y="448.6" width="0.6" height="2.9" fill="#8a8a8a"/></svg>
<span id="t143" class="t " style="left:652.35px;top:440px;font-size:5.8px;line-height:10px;color:#b4b4b4;transform-origin:0 50%;transform:scaleX(1.07);">25f</span>
<svg class="g" width="1067" height="600" viewBox="0 0 1067 600"><rect x="686.38" y="448.6" width="0.6" height="2.9" fill="#8a8a8a"/></svg>
<span id="t144" class="t " style="left:678.43px;top:440px;font-size:5.8px;line-height:10px;color:#b4b4b4;transform-origin:0 50%;transform:scaleX(1.09);">01:00f</span>
<svg class="g" width="1067" height="600" viewBox="0 0 1067 600"><rect x="716.91" y="448.6" width="0.6" height="2.9" fill="#8a8a8a"/></svg>
<span id="t145" class="t " style="left:713.41px;top:440px;font-size:5.8px;line-height:10px;color:#b4b4b4;transform-origin:0 50%;transform:scaleX(1.07);">05f</span>
<svg class="g" width="1067" height="600" viewBox="0 0 1067 600"><rect x="747.44" y="448.6" width="0.6" height="2.9" fill="#8a8a8a"/></svg>
<span id="t146" class="t " style="left:743.94px;top:440px;font-size:5.8px;line-height:10px;color:#b4b4b4;transform-origin:0 50%;transform:scaleX(1.07);">10f</span>
<svg class="g" width="1067" height="600" viewBox="0 0 1067 600"><rect x="777.97" y="448.6" width="0.6" height="2.9" fill="#8a8a8a"/></svg>
<span id="t147" class="t " style="left:774.47px;top:440px;font-size:5.8px;line-height:10px;color:#b4b4b4;transform-origin:0 50%;transform:scaleX(1.07);">15f</span>
<svg class="g" width="1067" height="600" viewBox="0 0 1067 600"><rect x="808.5" y="448.6" width="0.6" height="2.9" fill="#8a8a8a"/></svg>
<span id="t148" class="t " style="left:805px;top:440px;font-size:5.8px;line-height:10px;color:#b4b4b4;transform-origin:0 50%;transform:scaleX(1.07);">20f</span>
<svg class="g" width="1067" height="600" viewBox="0 0 1067 600"><rect x="839.03" y="448.6" width="0.6" height="2.9" fill="#8a8a8a"/></svg>
<span id="t149" class="t " style="left:835.53px;top:440px;font-size:5.8px;line-height:10px;color:#b4b4b4;transform-origin:0 50%;transform:scaleX(1.07);">25f</span>
<svg class="g" width="1067" height="600" viewBox="0 0 1067 600"><rect x="869.56" y="448.6" width="0.6" height="2.9" fill="#8a8a8a"/></svg>
<span id="t150" class="t " style="left:861.61px;top:440px;font-size:5.8px;line-height:10px;color:#b4b4b4;transform-origin:0 50%;transform:scaleX(1.09);">02:00f</span>
<svg class="g" width="1067" height="600" viewBox="0 0 1067 600"><rect x="900.09" y="448.6" width="0.6" height="2.9" fill="#8a8a8a"/></svg>
<span id="t151" class="t " style="left:896.59px;top:440px;font-size:5.8px;line-height:10px;color:#b4b4b4;transform-origin:0 50%;transform:scaleX(1.07);">05f</span>
<svg class="g" width="1067" height="600" viewBox="0 0 1067 600"><rect x="930.62" y="448.6" width="0.6" height="2.9" fill="#8a8a8a"/></svg>
<span id="t152" class="t " style="left:927.12px;top:440px;font-size:5.8px;line-height:10px;color:#b4b4b4;transform-origin:0 50%;transform:scaleX(1.07);">10f</span>
<svg class="g" width="1067" height="600" viewBox="0 0 1067 600"><rect x="961.15" y="448.6" width="0.6" height="2.9" fill="#8a8a8a"/></svg>
<span id="t153" class="t " style="left:957.65px;top:440px;font-size:5.8px;line-height:10px;color:#b4b4b4;transform-origin:0 50%;transform:scaleX(1.07);">15f</span>
<svg class="g" width="1067" height="600" viewBox="0 0 1067 600"><rect x="991.68" y="448.6" width="0.6" height="2.9" fill="#8a8a8a"/></svg>
<span id="t154" class="t " style="left:988.18px;top:440px;font-size:5.8px;line-height:10px;color:#b4b4b4;transform-origin:0 50%;transform:scaleX(1.07);">20f</span>
<svg class="g" width="1067" height="600" viewBox="0 0 1067 600"><rect x="1022.21" y="448.6" width="0.6" height="2.9" fill="#8a8a8a"/></svg>
<span id="t155" class="t " style="left:1018.71px;top:440px;font-size:5.8px;line-height:10px;color:#b4b4b4;transform-origin:0 50%;transform:scaleX(1.07);">25f</span>
<span id="t156" class="t " style="left:1041.5px;top:440px;font-size:5.8px;line-height:10px;color:#b4b4b4;transform-origin:0 50%;">03:0</span>
<svg class="g" width="1067" height="600" viewBox="0 0 1067 600"><rect x="503" y="452" width="550.5" height="7.9" fill="#6a6a6a"/><rect x="499.8" y="452" width="3.6" height="8" fill="#3d8be0" rx="1"/><rect x="1052.8" y="452" width="3.6" height="8" fill="#3d8be0" rx="1"/><rect x="503" y="459.9" width="550.5" height="2" fill="#27b02c"/><rect x="503" y="461.9" width="550.5" height="1.4" fill="#1c1c1c"/><rect x="503" y="463.3" width="553.5" height="126.1" fill="#2e2e2e"/><rect x="503" y="463.4" width="549.6" height="8.9" fill="#a6a5d0"/><rect x="503" y="472.3" width="553.5" height="1" fill="#1e1e1e"/><rect x="503" y="473.3" width="553.5" height="10.1" fill="#303030"/><rect x="503" y="483.4" width="553.5" height="28" fill="#393939"/><rect x="503" y="511.4" width="553.5" height="1" fill="#1e1e1e"/></svg>
<span id="t157" class="t m" style="left:507px;top:484px;font-size:6.9px;line-height:10px;color:#b8b8b8;transform-origin:0 50%;">x=random(-10,10)</span>
<span id="t158" class="t m" style="left:507px;top:493px;font-size:6.9px;line-height:10px;color:#b8b8b8;transform-origin:0 50%;">y=random(-10,10)</span>
<span id="t159" class="t m" style="left:507px;top:501px;font-size:6.9px;line-height:10px;color:#b8b8b8;transform-origin:0 50%;">add(value,[x,y])</span>
<svg class="g" width="1067" height="600" viewBox="0 0 1067 600"><g transform="translate(502.5 473.8)"><path d="M0.500 0.500H3.500M2 0.500V7.500M0.500 7.500H3.500" stroke="#dcdcdc" stroke-width="0.800" fill="none"/></g><rect x="503" y="512.4" width="549.6" height="9.06" fill="#787889"/><rect x="503" y="521.46" width="549.6" height="1.3" fill="#1f1f28"/><rect x="503" y="522.96" width="549.6" height="9.06" fill="#787889"/><rect x="503" y="532.02" width="549.6" height="1.3" fill="#1f1f28"/><rect x="503" y="533.52" width="549.6" height="9.06" fill="#787889"/><rect x="503" y="542.58" width="549.6" height="1.3" fill="#1f1f28"/><rect x="503" y="544.08" width="549.6" height="9.06" fill="#787889"/><rect x="503" y="553.14" width="549.6" height="1.3" fill="#1f1f28"/><rect x="503" y="554.64" width="549.6" height="9.06" fill="#787889"/><rect x="503" y="563.7" width="549.6" height="1.3" fill="#1f1f28"/><rect x="503" y="565.2" width="549.6" height="9.06" fill="#787889"/><rect x="503" y="574.26" width="549.6" height="1.3" fill="#1f1f28"/><rect x="503" y="575.76" width="549.6" height="9.06" fill="#787889"/><rect x="503" y="584.82" width="549.6" height="1.3" fill="#1f1f28"/><rect x="503" y="586.32" width="549.6" height="3.08" fill="#787889"/><rect x="503" y="589.4" width="549.6" height="0" fill="#1f1f28"/><rect x="1052.6" y="463.3" width="3.9" height="126.1" fill="#444444"/><rect x="1056.5" y="432" width="8.7" height="164.6" fill="#232323"/><rect x="1057" y="474" width="6.5" height="68.5" fill="#3b3b3b" rx="1"/><rect x="1057" y="542.5" width="6.5" height="46.5" fill="#1c1c1c"/><g transform="translate(1057.5 452.4)"><path d="M0.700 0.600H6.800V5L3.750 7.900L0.700 5Z" fill="#e6e6e6"/><rect x="2.600" y="2" width="2.300" height="2.600" fill="#555"/></g><g transform="translate(1057 464)"><circle cx="4" cy="4" r="3.200" fill="#d8d8d8"/><path d="M4 4L4 0.800A3.200 3.200 0 0 1 7.200 4Z" fill="#444"/><path d="M1.200 6.800L6.800 1.200" stroke="#444" stroke-width="0.700"/></g><rect x="503" y="452" width="0.9" height="137.4" fill="#7fa6d6"/><g transform="translate(500 443.3)"><path d="M0.500 0.500H7V4.500L3.750 8.500L0.500 4.500Z" fill="#3d8be0"/></g><rect x="-4" y="416.4" width="1075" height="1.3" fill="#2b5180"/><rect x="-4" y="416.4" width="5.4" height="187.6" fill="#2b5180"/><rect x="1065.2" y="416.4" width="5.8" height="187.6" fill="#2b5180"/><rect x="-4" y="596.6" width="1075" height="7.4" fill="#27466a"/><rect x="-4" y="-4" width="1075" height="16" fill="#f2f5fb"/><rect x="-4" y="10.5" width="1075" height="1.5" fill="#f9fafd"/><rect x="1" y="1.3" width="9.2" height="8.9" fill="#14085c" rx="1.8"/></svg>
<span id="t160" class="t b" style="left:2.4px;top:1px;font-size:5.6px;line-height:10px;color:#b4a8ff;transform-origin:0 50%;transform:scaleX(0.93);">Ae</span>
<span id="t161" class="t " style="left:13.5px;top:2px;font-size:6.6px;line-height:10px;color:#151515;transform-origin:0 50%;transform:scaleX(0.99);">Adobe After Effects 2024 - C:\Users\Yusuke\Desktop\VD\AfterEffects\02 Second\Kitchen Takahashi\Kitchen Takahashi_2024.aep *</span>
<svg class="g" width="1067" height="600" viewBox="0 0 1067 600"><rect x="1000" y="5.6" width="5.5" height="0.8" fill="#555"/><g transform="translate(1024 2.6)"><rect x="0.5" y="1.5" width="4.6" height="4.6" rx="1.2" fill="none" stroke="#333" stroke-width="0.9"/><path d="M2 0.500H4.800Q6.100 0.500 6.100 1.800V4.600" fill="none" stroke="#333" stroke-width="0.9"/></g><g transform="translate(1050 3)"><path d="M0.5 0.5L5.5 5.5M5.5 0.5L0.5 5.5" stroke="#222" stroke-width="0.9" fill="none"/></g><rect x="-4" y="12" width="1075" height="12" fill="#ffffff"/></svg>
<span id="t162" class="t " style="left:4px;top:13px;font-size:6.8px;line-height:10px;color:#1a1a1a;transform-origin:0 50%;transform:scaleX(0.72);">ファイル(F)</span>
<span id="t163" class="t " style="left:38.6px;top:13px;font-size:6.8px;line-height:10px;color:#1a1a1a;transform-origin:0 50%;transform:scaleX(0.89);">編集(E)</span>
<span id="t164" class="t " style="left:67px;top:13px;font-size:6.8px;line-height:10px;color:#1a1a1a;transform-origin:0 50%;transform:scaleX(0.76);">コンポジション(C)</span>
<span id="t165" class="t " style="left:119px;top:13px;font-size:6.8px;line-height:10px;color:#1a1a1a;transform-origin:0 50%;transform:scaleX(0.77);">レイヤー(L)</span>
<span id="t166" class="t " style="left:154px;top:13px;font-size:6.8px;line-height:10px;color:#1a1a1a;transform-origin:0 50%;transform:scaleX(0.71);">エフェクト(T)</span>
<span id="t167" class="t " style="left:192px;top:13px;font-size:6.8px;line-height:10px;color:#1a1a1a;transform-origin:0 50%;transform:scaleX(0.75);">アニメーション(A)</span>
<span id="t168" class="t " style="left:242.7px;top:13px;font-size:6.8px;line-height:10px;color:#1a1a1a;transform-origin:0 50%;transform:scaleX(0.72);">ビュー(V)</span>
<span id="t169" class="t " style="left:271.6px;top:13px;font-size:6.8px;line-height:10px;color:#1a1a1a;transform-origin:0 50%;transform:scaleX(0.74);">ウィンドウ(W)</span>
<span id="t170" class="t " style="left:313.4px;top:13px;font-size:6.8px;line-height:10px;color:#1a1a1a;transform-origin:0 50%;transform:scaleX(0.81);">ヘルプ(H)</span>
<svg class="g" width="1067" height="600" viewBox="0 0 1067 600"><rect x="-4" y="24" width="1075" height="14" fill="#1b1b1b"/><rect x="-4" y="37.6" width="1075" height="0.8" fill="#151515"/><rect x="7.6" y="25.2" width="10.4" height="11.4" fill="#0d1626" rx="1"/><g transform="translate(9 26.5)"><path d="M0.6 0.3L7.4 4.2L4.1 5.0L2.6 8.6Z" fill="#3d8ff0"/></g><g transform="translate(22.6 26.2)"><path d="M2.6 9L1 5.8Q0.6 5 1.3 4.700Q1.9 4.500 2.4 5.200L2.9 5.900V1.900Q2.900 1.300 3.500 1.300Q4.100 1.300 4.100 1.900V4.200V1Q4.100 0.400 4.700 0.400Q5.300 0.400 5.300 1V4.200V1.500Q5.300 0.900 5.900 0.900Q6.500 0.900 6.500 1.500V4.500V2.700Q6.500 2.100 7.100 2.100Q7.700 2.100 7.700 2.700V6.200Q7.700 9 5.600 9Z" fill="#dcdcdc"/></g><rect x="323.8" y="27.9" width="6.6" height="6.6" fill="none" stroke="#c0c0c0" stroke-width="1" rx="0.6"/></svg>
<span id="t171" class="t " style="left:332.5px;top:27px;font-size:6.6px;line-height:10px;color:#9a9a9a;transform-origin:0 50%;transform:scaleX(0.75);">スナップ</span>
<svg class="g" width="1067" height="600" viewBox="0 0 1067 600"><g transform="translate(361 26.5)"><path d="M1 8L4.2 4.6M3.4 3.4L7.6 1.2L5.6 5.4" stroke="#c9c9c9" stroke-width="1" fill="none"/><circle cx="7.2" cy="1.6" r="1" fill="#c9c9c9"/></g><g transform="translate(374.5 26.6)"><path d="M0.6 2.4V0.6H2.4M7 0.6H8.8V2.4M8.8 6.6V8.4H7M2.4 8.4H0.6V6.600M2.6 2.6L6.800 6.400M6.800 2.600L2.600 6.400" stroke="#2f86e6" stroke-width="1" fill="none"/></g></svg>
<span id="t172" class="t " style="left:603.4px;top:27px;font-size:6.5px;line-height:10px;color:#9a9a9a;transform-origin:0 50%;transform:scaleX(0.8);">デフォルト</span>
<span id="t173" class="t " style="left:650.9px;top:27px;font-size:6.5px;line-height:10px;color:#9a9a9a;transform-origin:0 50%;transform:scaleX(0.84);">レビュー</span>
<span id="t174" class="t " style="left:697px;top:27px;font-size:6.5px;line-height:10px;color:#9a9a9a;transform-origin:0 50%;">学習</span>
<span id="t175" class="t " style="left:736.5px;top:27px;font-size:6.5px;line-height:10px;color:#9a9a9a;transform-origin:0 50%;transform:scaleX(0.91);">小さい画面</span>
<span id="t176" class="t " style="left:792px;top:27px;font-size:6.5px;line-height:10px;color:#2f86e6;transform-origin:0 50%;transform:scaleX(0.98);">標準</span>
<span id="t177" class="t " style="left:830.6px;top:27px;font-size:6.5px;line-height:10px;color:#9a9a9a;transform-origin:0 50%;transform:scaleX(0.67);">ライブラリ</span>
<span id="t178" class="t " style="left:876.8px;top:27px;font-size:6.5px;line-height:10px;color:#7d7d7d;transform-origin:0 50%;transform:scaleX(0.88);">Looktone</span>
<svg class="g" width="1067" height="600" viewBox="0 0 1067 600"><rect x="813.5" y="29.2" width="4.4" height="0.8" fill="#2f86e6"/><rect x="813.5" y="30.9" width="4.4" height="0.8" fill="#2f86e6"/><rect x="813.5" y="32.6" width="4.4" height="0.8" fill="#2f86e6"/><g transform="translate(924.8 28.6)"><path d="M0.7 0.6L2.7 2.6L0.7 4.6M3.6 0.6L5.6 2.6L3.6 4.6" stroke="#dcdcdc" stroke-width="1.1" fill="none"/></g><rect x="1049.2" y="28.3" width="11.5" height="6.6" fill="#dcdcdc" rx="1"/><rect x="1051.2" y="30" width="3.2" height="3.2" fill="#1b1b1b" rx="0.6"/><rect x="1055.6" y="30" width="3.4" height="0.9" fill="#1b1b1b"/><rect x="1055.6" y="32.2" width="3.4" height="0.9" fill="#1b1b1b"/><rect x="34" y="25" width="282.2" height="368" rx="4" fill="#000" opacity="0.35" filter="url(#sh)"/><path d="M34.5 24H315.7V388Q315.7 391.5 312.2 391.5H38Q34.5 391.5 34.5 388Z" fill="#f8f8f8"/><rect x="37" y="115.6" width="275" height="11.4" fill="#f0f0f0" rx="2"/></svg>
<span id="t179" class="t k" style="left:55.6px;top:27px;font-size:6.9px;line-height:10px;color:#111;transform-origin:0 50%;transform:scaleX(0.76);">ストップウォッチ使用の取り消し</span>
<span id="t180" class="t k" style="right:765.8px;top:27px;font-size:6.6px;line-height:10px;color:#111;transform-origin:100% 50%;">Ctrl+Z</span>
<span id="t181" class="t k" style="left:55.6px;top:39px;font-size:6.9px;line-height:10px;color:#a6a6a6;transform-origin:0 50%;transform:scaleX(0.83);">やり直し不可</span>
<span id="t182" class="t k" style="right:765.8px;top:39px;font-size:6.6px;line-height:10px;color:#a6a6a6;transform-origin:100% 50%;">Ctrl+Shift+Z</span>
<span id="t183" class="t k" style="left:55.6px;top:51px;font-size:6.9px;line-height:10px;color:#111;transform-origin:0 50%;transform:scaleX(0.66);">ヒストリー</span>
<svg class="g" width="1067" height="600" viewBox="0 0 1067 600"><g transform="translate(303 52.7)"><path d="M0.8 0.6L3 2.8L0.8 5" stroke="#333" stroke-width="1.1" fill="none"/></g></svg>
<span id="t184" class="t k" style="left:55.6px;top:68px;font-size:6.9px;line-height:10px;color:#111;transform-origin:0 50%;transform:scaleX(0.74);">カット(T)</span>
<span id="t185" class="t k" style="right:765.8px;top:68px;font-size:6.6px;line-height:10px;color:#111;transform-origin:100% 50%;">Ctrl+X</span>
<span id="t186" class="t k" style="left:55.6px;top:80px;font-size:6.9px;line-height:10px;color:#111;transform-origin:0 50%;transform:scaleX(0.73);">コピー(C)</span>
<span id="t187" class="t k" style="right:765.8px;top:80px;font-size:6.6px;line-height:10px;color:#111;transform-origin:100% 50%;">Ctrl+C</span>
<span id="t188" class="t k" style="left:55.6px;top:92px;font-size:6.9px;line-height:10px;color:#111;transform-origin:0 50%;transform:scaleX(0.74);">プロパティリンクと一緒にコピー</span>
<span id="t189" class="t k" style="right:765.8px;top:92px;font-size:6.6px;line-height:10px;color:#111;transform-origin:100% 50%;">Ctrl+Alt+C</span>
<span id="t190" class="t k" style="left:55.6px;top:105px;font-size:6.9px;line-height:10px;color:#111;transform-origin:0 50%;transform:scaleX(0.77);">相対的なプロパティリンクと一緒にコピー</span>
<span id="t191" class="t k" style="left:55.6px;top:117px;font-size:6.9px;line-height:10px;color:#111;transform-origin:0 50%;transform:scaleX(0.73);">エクスプレッションのみをコピー</span>
<span id="t192" class="t k" style="left:55.6px;top:129px;font-size:6.9px;line-height:10px;color:#a6a6a6;transform-origin:0 50%;transform:scaleX(0.76);">ペースト(P)</span>
<span id="t193" class="t k" style="right:765.8px;top:129px;font-size:6.6px;line-height:10px;color:#a6a6a6;transform-origin:100% 50%;">Ctrl+V</span>
<span id="t194" class="t k" style="left:55.6px;top:141px;font-size:6.9px;line-height:10px;color:#111;transform-origin:0 50%;transform:scaleX(0.89);">消去(E)</span>
<span id="t195" class="t k" style="right:765.8px;top:141px;font-size:6.6px;line-height:10px;color:#111;transform-origin:100% 50%;">Delete</span>
<span id="t196" class="t k" style="left:55.6px;top:158px;font-size:6.9px;line-height:10px;color:#111;transform-origin:0 50%;transform:scaleX(0.95);">複製(D)</span>
<span id="t197" class="t k" style="right:765.8px;top:158px;font-size:6.6px;line-height:10px;color:#111;transform-origin:100% 50%;">Ctrl+D</span>
<span id="t198" class="t k" style="left:55.6px;top:171px;font-size:6.9px;line-height:10px;color:#111;transform-origin:0 50%;transform:scaleX(0.79);">レイヤーを分割</span>
<span id="t199" class="t k" style="right:765.8px;top:171px;font-size:6.6px;line-height:10px;color:#111;transform-origin:100% 50%;">Ctrl+Shift+D</span>
<span id="t200" class="t k" style="left:55.6px;top:183px;font-size:6.9px;line-height:10px;color:#111;transform-origin:0 50%;transform:scaleX(0.69);">ワークエリアのリフト</span>
<span id="t201" class="t k" style="left:55.6px;top:195px;font-size:6.9px;line-height:10px;color:#111;transform-origin:0 50%;transform:scaleX(0.77);">ワークエリアの抽出</span>
<span id="t202" class="t k" style="left:55.6px;top:207px;font-size:6.9px;line-height:10px;color:#111;transform-origin:0 50%;transform:scaleX(0.87);">すべてを選択(A)</span>
<span id="t203" class="t k" style="right:765.8px;top:207px;font-size:6.6px;line-height:10px;color:#111;transform-origin:100% 50%;">Ctrl+A</span>
<span id="t204" class="t k" style="left:55.6px;top:220px;font-size:6.9px;line-height:10px;color:#111;transform-origin:0 50%;transform:scaleX(0.88);">すべてを選択解除</span>
<span id="t205" class="t k" style="right:765.8px;top:220px;font-size:6.6px;line-height:10px;color:#111;transform-origin:100% 50%;">Ctrl+Shift+A</span>
<span id="t206" class="t k" style="left:55.6px;top:237px;font-size:6.9px;line-height:10px;color:#111;transform-origin:0 50%;transform:scaleX(0.79);">ラベル(L)</span>
<svg class="g" width="1067" height="600" viewBox="0 0 1067 600"><g transform="translate(303 239)"><path d="M0.8 0.6L3 2.8L0.8 5" stroke="#333" stroke-width="1.1" fill="none"/></g></svg>
<span id="t207" class="t k" style="left:55.6px;top:249px;font-size:6.9px;line-height:10px;color:#a6a6a6;transform-origin:0 50%;transform:scaleX(0.75);">キーフレームのラベルグループを選択</span>
<svg class="g" width="1067" height="600" viewBox="0 0 1067 600"><g transform="translate(303 251)"><path d="M0.8 0.6L3 2.8L0.8 5" stroke="#b5b5b5" stroke-width="1.1" fill="none"/></g></svg>
<span id="t208" class="t k" style="left:55.6px;top:267px;font-size:6.9px;line-height:10px;color:#111;transform-origin:0 50%;transform:scaleX(0.77);">キャッシュの消去</span>
<svg class="g" width="1067" height="600" viewBox="0 0 1067 600"><g transform="translate(303 268.5)"><path d="M0.8 0.6L3 2.8L0.8 5" stroke="#333" stroke-width="1.1" fill="none"/></g></svg>
<span id="t209" class="t k" style="left:55.6px;top:284px;font-size:6.9px;line-height:10px;color:#111;transform-origin:0 50%;transform:scaleX(0.8);">オリジナルを編集...</span>
<span id="t210" class="t k" style="right:765.8px;top:284px;font-size:6.6px;line-height:10px;color:#111;transform-origin:100% 50%;">Ctrl+E</span>
<span id="t211" class="t k" style="left:55.6px;top:296px;font-size:6.9px;line-height:10px;color:#a6a6a6;transform-origin:0 50%;transform:scaleX(0.97);">Adobe Audition で編集</span>
<span id="t212" class="t k" style="left:55.6px;top:313px;font-size:6.9px;line-height:10px;color:#111;transform-origin:0 50%;transform:scaleX(0.72);">チームプロジェクト</span>
<svg class="g" width="1067" height="600" viewBox="0 0 1067 600"><g transform="translate(303 314.8)"><path d="M0.8 0.6L3 2.8L0.8 5" stroke="#333" stroke-width="1.1" fill="none"/></g></svg>
<span id="t213" class="t k" style="left:55.6px;top:330px;font-size:6.9px;line-height:10px;color:#111;transform-origin:0 50%;transform:scaleX(0.79);">書き出しテンプレート(M)</span>
<svg class="g" width="1067" height="600" viewBox="0 0 1067 600"><g transform="translate(303 332.1)"><path d="M0.8 0.6L3 2.8L0.8 5" stroke="#333" stroke-width="1.1" fill="none"/></g></svg>
<span id="t214" class="t k" style="left:55.6px;top:342px;font-size:6.9px;line-height:10px;color:#111;transform-origin:0 50%;transform:scaleX(0.96);">環境設定(F)</span>
<svg class="g" width="1067" height="600" viewBox="0 0 1067 600"><g transform="translate(303 344.2)"><path d="M0.8 0.6L3 2.8L0.8 5" stroke="#333" stroke-width="1.1" fill="none"/></g></svg>
<span id="t215" class="t k" style="left:55.6px;top:354px;font-size:6.9px;line-height:10px;color:#111;transform-origin:0 50%;transform:scaleX(0.95);">設定の同期</span>
<svg class="g" width="1067" height="600" viewBox="0 0 1067 600"><g transform="translate(303 356.3)"><path d="M0.8 0.6L3 2.8L0.8 5" stroke="#333" stroke-width="1.1" fill="none"/></g></svg>
<span id="t216" class="t k" style="left:55.6px;top:366px;font-size:6.9px;line-height:10px;color:#111;transform-origin:0 50%;transform:scaleX(0.68);">キーボードショートカット</span>
<span id="t217" class="t k" style="right:765.8px;top:366px;font-size:6.6px;line-height:10px;color:#111;transform-origin:100% 50%;">Ctrl+Alt+'</span>
<span id="t218" class="t k" style="left:55.6px;top:378px;font-size:6.9px;line-height:10px;color:#a6a6a6;transform-origin:0 50%;transform:scaleX(0.92);">Paste Mocha mask</span>
<svg class="g" width="1067" height="600" viewBox="0 0 1067 600"><rect x="39.5" y="63.55" width="271.5" height="0.9" fill="#e4e4e4"/><rect x="39.5" y="153.85" width="271.5" height="0.9" fill="#e4e4e4"/><rect x="39.5" y="232.35" width="271.5" height="0.9" fill="#e4e4e4"/><rect x="39.5" y="262.05" width="271.5" height="0.9" fill="#e4e4e4"/><rect x="39.5" y="279.15" width="271.5" height="0.9" fill="#e4e4e4"/><rect x="39.5" y="308.75" width="271.5" height="0.9" fill="#e4e4e4"/><rect x="39.5" y="325.55" width="271.5" height="0.9" fill="#e4e4e4"/><g transform="translate(76.6 121.2)"><path d="M0.7 0.700V10.200L3.000 8.000L4.700 11.900L6.300 11.200L4.600 7.400H7.700Z" fill="#fff" stroke="#111" stroke-width="0.900" stroke-linejoin="round"/></g></svg>
</div>
</body>
</html>
